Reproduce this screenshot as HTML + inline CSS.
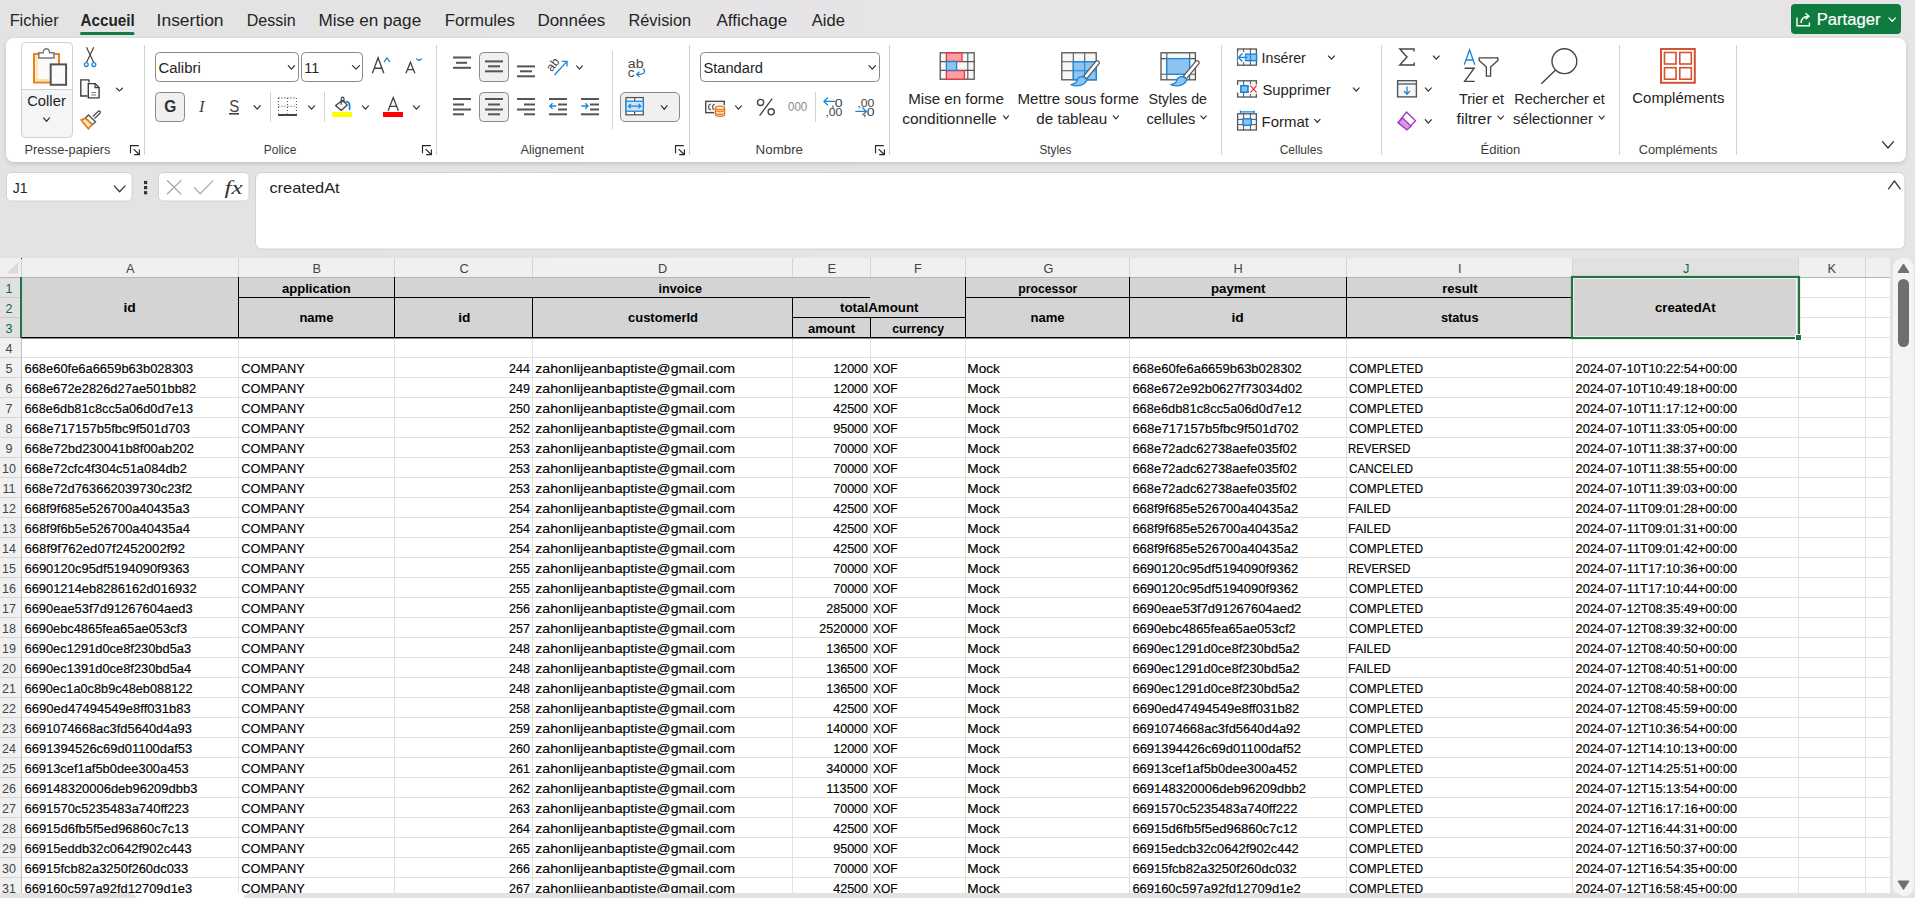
<!DOCTYPE html>
<html><head><meta charset="utf-8"><title>Excel</title>
<style>
html,body{margin:0;padding:0;width:1915px;height:898px;overflow:hidden;background:#e3e3e3;font-family:"Liberation Sans",sans-serif;}
svg.page{position:absolute;left:0;top:0;display:block}
text{white-space:pre}
</style></head><body>
<svg class="page" width="1915" height="898" viewBox="0 0 1915 898">
<defs>
<filter id="sh" x="-2%" y="-20%" width="104%" height="150%"><feDropShadow dx="0" dy="1.5" stdDeviation="2" flood-color="#000" flood-opacity="0.16"/></filter>
</defs>
<defs><linearGradient id="bgg" x1="0" y1="0" x2="1" y2="0"><stop offset="0" stop-color="#e3e3e3"/><stop offset="0.45" stop-color="#e6e4e6"/><stop offset="1" stop-color="#e7e4e7"/></linearGradient></defs>
<rect x="0" y="0" width="1915" height="898" fill="url(#bgg)" />
<text x="9.65" y="26.4" font-family="Liberation Sans" font-size="17.2" fill="#242424" textLength="48.99" lengthAdjust="spacingAndGlyphs">Fichier</text>
<text x="80.50" y="26.4" font-family="Liberation Sans" font-size="17.2" font-weight="bold" fill="#242424" textLength="54.19" lengthAdjust="spacingAndGlyphs">Accueil</text>
<text x="156.58" y="26.4" font-family="Liberation Sans" font-size="17.2" fill="#242424" textLength="66.98" lengthAdjust="spacingAndGlyphs">Insertion</text>
<text x="246.67" y="26.4" font-family="Liberation Sans" font-size="17.2" fill="#242424" textLength="49.06" lengthAdjust="spacingAndGlyphs">Dessin</text>
<text x="318.51" y="26.4" font-family="Liberation Sans" font-size="17.2" fill="#242424" textLength="102.65" lengthAdjust="spacingAndGlyphs">Mise en page</text>
<text x="444.72" y="26.4" font-family="Liberation Sans" font-size="17.2" fill="#242424" textLength="70.16" lengthAdjust="spacingAndGlyphs">Formules</text>
<text x="537.41" y="26.4" font-family="Liberation Sans" font-size="17.2" fill="#242424" textLength="67.87" lengthAdjust="spacingAndGlyphs">Données</text>
<text x="628.55" y="26.4" font-family="Liberation Sans" font-size="17.2" fill="#242424" textLength="62.48" lengthAdjust="spacingAndGlyphs">Révision</text>
<text x="716.50" y="26.4" font-family="Liberation Sans" font-size="17.2" fill="#242424" textLength="70.75" lengthAdjust="spacingAndGlyphs">Affichage</text>
<text x="811.80" y="26.4" font-family="Liberation Sans" font-size="17.2" fill="#242424" textLength="33.14" lengthAdjust="spacingAndGlyphs">Aide</text>
<rect x="80" y="32" width="54.5" height="3" fill="#107c41" rx="1.5" />
<rect x="1791" y="4" width="110" height="30" fill="#0f7b3f" rx="4" />
<text x="1816.73" y="25.1" font-family="Liberation Sans" font-size="17.2" stroke="#ffffff" stroke-width="0.2" fill="#ffffff" textLength="63.80" lengthAdjust="spacingAndGlyphs">Partager</text>
<rect x="6" y="38" width="1900" height="124" rx="8" fill="#ffffff" filter="url(#sh)"/>
<rect x="144" y="45" width="1" height="110" fill="#d2d2d2"/>
<rect x="436" y="45" width="1" height="110" fill="#d2d2d2"/>
<rect x="689" y="45" width="1" height="110" fill="#d2d2d2"/>
<rect x="889" y="45" width="1" height="110" fill="#d2d2d2"/>
<rect x="1221" y="45" width="1" height="110" fill="#d2d2d2"/>
<rect x="1381" y="45" width="1" height="110" fill="#d2d2d2"/>
<rect x="1619" y="45" width="1" height="110" fill="#d2d2d2"/>
<rect x="1736" y="45" width="1" height="110" fill="#d2d2d2"/>
<rect x="155.5" y="52.5" width="143" height="29" fill="#ffffff" rx="4" stroke="#8a8a8a" stroke-width="1" />
<text x="158.50" y="73.2" font-family="Liberation Sans" font-size="15.5" fill="#242424" textLength="42.23" lengthAdjust="spacingAndGlyphs">Calibri</text>
<rect x="301.5" y="52.5" width="61" height="29" fill="#ffffff" rx="4" stroke="#8a8a8a" stroke-width="1" />
<text x="304.37" y="73.2" font-family="Liberation Sans" font-size="15.5" fill="#242424" textLength="14.90" lengthAdjust="spacingAndGlyphs">11</text>
<rect x="700.5" y="52.5" width="179" height="29" fill="#ffffff" rx="4" stroke="#8a8a8a" stroke-width="1" />
<text x="703.40" y="73.0" font-family="Liberation Sans" font-size="15.5" fill="#242424" textLength="59.59" lengthAdjust="spacingAndGlyphs">Standard</text>
<path d="M25.5 42.5 H68.5 Q72.5 42.5 72.5 46.5 V89 H21.5 V46.5 Q21.5 42.5 25.5 42.5 Z" fill="#ffffff" />
<path d="M21.5 89 H72.5 V133.5 Q72.5 137.5 68.5 137.5 H25.5 Q21.5 137.5 21.5 133.5 Z" fill="#f5f5f5" />
<rect x="21.5" y="42.5" width="51" height="95" rx="4" fill="none" stroke="#d0d0d0" stroke-width="1"/>
<rect x="22" y="89" width="50" height="1" fill="#d0d0d0"/>
<rect x="34" y="54" width="25" height="28.5" fill="#fafafa" stroke="#e8821e" stroke-width="2"/>
<rect x="35.5" y="55.5" width="2" height="25.5" fill="#fbe3a0"/>
<rect x="35.5" y="79" width="14" height="2" fill="#fbe3a0"/>
<path d="M38.8 58 V52.8 H43.2 Q43.5 48.8 46.4 48.8 Q49.3 48.8 49.6 52.8 H54 V58 Z" fill="#ffffff" stroke="#7a7a7a" stroke-width="1.5" />
<rect x="50.7" y="64.4" width="15.4" height="20.4" fill="#fafafa" stroke="#555555" stroke-width="2"/>
<path d="M43.54 117.94 L46.55 121.26 L49.56 117.94" fill="none" stroke="#333333" stroke-width="1.2" stroke-linecap="round" stroke-linejoin="round"/>
<path d="M86.5 47.2 L93.7 62.6 M93.7 47.2 L86.5 62.6" fill="none" stroke="#3a3a3a" stroke-width="1.1" />
<circle cx="86.3" cy="64.6" r="1.9" fill="#ffffff" stroke="#1a86d9" stroke-width="1.3"/>
<circle cx="93.9" cy="64.6" r="1.9" fill="#ffffff" stroke="#1a86d9" stroke-width="1.3"/>
<path d="M89 82.5 V80 Q89 79.8 88.8 79.8 H80.8 V96 H87.5" fill="#f9f9f9" stroke="#3a3a3a" stroke-width="1.35" />
<path d="M88.3 83.6 H95.2 L99.1 87.5 V97.8 H88.3 Z" fill="#ffffff" stroke="#3a3a3a" stroke-width="1.35" />
<path d="M95 83.6 V87.7 H99" fill="none" stroke="#3a3a3a" stroke-width="1.2" />
<path d="M91.3 92.6 H96.2 M91.3 95 H96.2" fill="none" stroke="#777777" stroke-width="1" />
<path d="M116.54 88.24 L119.45 90.86 L122.36 88.24" fill="none" stroke="#333333" stroke-width="1.2" stroke-linecap="round" stroke-linejoin="round"/>
<path d="M93 116.5 L98.3 111.3 Q99.5 110.6 100.2 111.6 Q100.6 112.7 99.8 113.6 L94.6 118.6" fill="none" stroke="#555555" stroke-width="1.4" />
<path d="M88.5 115 L95.5 121.8 L92.3 124.8 L85.5 118 Z" fill="#ffffff" stroke="#555555" stroke-width="1.4" />
<path d="M85.3 118.2 Q82.5 119.6 81 119.8 L88.5 129 Q89.8 126.5 92.2 124.6 Z" fill="#fde7b5" stroke="#e07a1a" stroke-width="1.6" stroke-linejoin="round"/>
<path d="M130.5 153.3 V145.6 H138.8" fill="none" stroke="#262626" stroke-width="1.15" />
<path d="M133.6 149.2 L139.2 154.5 M139.4 149.4 V154.6 H134.2" fill="none" stroke="#262626" stroke-width="1.15" />
<path d="M422.5 153.3 V145.6 H430.8" fill="none" stroke="#262626" stroke-width="1.15" />
<path d="M425.6 149.2 L431.2 154.5 M431.4 149.4 V154.6 H426.2" fill="none" stroke="#262626" stroke-width="1.15" />
<path d="M675.5 153.3 V145.6 H683.8" fill="none" stroke="#262626" stroke-width="1.15" />
<path d="M678.6 149.2 L684.2 154.5 M684.4 149.4 V154.6 H679.2" fill="none" stroke="#262626" stroke-width="1.15" />
<path d="M875.5 153.3 V145.6 H883.8" fill="none" stroke="#262626" stroke-width="1.15" />
<path d="M878.6 149.2 L884.2 154.5 M884.4 149.4 V154.6 H879.2" fill="none" stroke="#262626" stroke-width="1.15" />
<path d="M288.34 65.54 L291.45 69.16 L294.56 65.54" fill="none" stroke="#333333" stroke-width="1.2" stroke-linecap="round" stroke-linejoin="round"/>
<path d="M352.54 65.54 L356.00 69.16 L359.46 65.54" fill="none" stroke="#333333" stroke-width="1.2" stroke-linecap="round" stroke-linejoin="round"/>
<path d="M372.4 73.2 L378.1 57.7 L383.8 73.2 M374.3 68.2 H381.9" fill="none" stroke="#444444" stroke-width="1.35" stroke-linejoin="miter"/>
<path d="M384.28 61.59 L386.95 57.81 L389.62 61.59" fill="none" stroke="#1a86d9" stroke-width="1.3" stroke-linecap="round" stroke-linejoin="round"/>
<path d="M405.9 73.2 L410.4 62.3 L414.9 73.2 M407.4 69.6 H413.4" fill="none" stroke="#444444" stroke-width="1.3" stroke-linejoin="miter"/>
<path d="M416.58 58.98 L419.00 60.41 L421.42 58.98" fill="none" stroke="#1a86d9" stroke-width="1.3" stroke-linecap="round" stroke-linejoin="round"/>
<rect x="155.5" y="92.5" width="29" height="29" rx="4" fill="#f0f0f0" stroke="#8a8a8a" stroke-width="1"/>
<text x="164.30" y="112.2" font-family="Liberation Sans" font-size="16.5" font-weight="bold" fill="#303030" textLength="12.09" lengthAdjust="spacingAndGlyphs">G</text>
<text x="198.97" y="112.2" font-family="Liberation Serif" font-size="17" font-style="italic" fill="#444444" textLength="5.52" lengthAdjust="spacingAndGlyphs">I</text>
<text x="229.30" y="112.2" font-family="Liberation Sans" font-size="16" fill="#444444" textLength="10.03" lengthAdjust="spacingAndGlyphs">S</text>
<rect x="229" y="113" width="10" height="1.6" fill="#444444"/>
<path d="M254.14 105.74 L257.15 109.16 L260.16 105.74" fill="none" stroke="#333333" stroke-width="1.2" stroke-linecap="round" stroke-linejoin="round"/>
<rect x="270" y="92" width="1" height="30" fill="#d2d2d2"/>
<path d="M278.4 97.9 H296.4" stroke="#555" stroke-width="1.1" stroke-dasharray="1.1 1.9"/><path d="M278.4 106.3 H296.4" stroke="#555" stroke-width="1.1" stroke-dasharray="1.1 1.9"/><path d="M278.4 97.9 V113.5" stroke="#555" stroke-width="1.1" stroke-dasharray="1.1 1.9"/><path d="M287.4 97.9 V113.5" stroke="#555" stroke-width="1.1" stroke-dasharray="1.1 1.9"/><path d="M296.4 97.9 V113.5" stroke="#555" stroke-width="1.1" stroke-dasharray="1.1 1.9"/>
<rect x="278" y="114" width="19" height="2" fill="#444444"/>
<path d="M308.54 105.84 L311.55 109.06 L314.56 105.84" fill="none" stroke="#333333" stroke-width="1.2" stroke-linecap="round" stroke-linejoin="round"/>
<rect x="324" y="92" width="1" height="30" fill="#d2d2d2"/>
<path d="M335.6 105.4 L342.6 100.2 L347.2 104.9 L341.2 110.4 Z" fill="#f7f7f7" stroke="#444444" stroke-width="1.3" stroke-linejoin="round"/>
<path d="M341.2 104.8 V98.6 Q341.4 97.2 342.6 97.2 Q343.9 97.3 344 98.6 V102.5" fill="none" stroke="#444444" stroke-width="1.2" />
<path d="M346.2 101.6 Q349.6 101.9 349.6 105.5 V109.2" fill="none" stroke="#1a86d9" stroke-width="1.8" stroke-linecap="round"/>
<rect x="332" y="112" width="20" height="5" fill="#ffff00" />
<path d="M362.44 105.84 L365.45 109.06 L368.46 105.84" fill="none" stroke="#333333" stroke-width="1.2" stroke-linecap="round" stroke-linejoin="round"/>
<path d="M388.1 110.8 L393.25 97.6 L398.4 110.8 M389.9 106.3 H396.6" fill="none" stroke="#444444" stroke-width="1.35" stroke-linejoin="miter"/>
<rect x="383" y="112" width="20" height="5" fill="#ff0000" />
<path d="M413.44 105.84 L416.45 109.06 L419.46 105.84" fill="none" stroke="#333333" stroke-width="1.2" stroke-linecap="round" stroke-linejoin="round"/>
<rect x="453" y="56.5" width="18" height="2" fill="#555555"/>
<rect x="456" y="61.8" width="11" height="2" fill="#555555"/>
<rect x="453" y="66.8" width="18" height="2" fill="#555555"/>
<rect x="479.5" y="52.5" width="29" height="29" rx="4" fill="#f0f0f0" stroke="#8a8a8a" stroke-width="1"/>
<rect x="485" y="60.4" width="18" height="2" fill="#555555"/>
<rect x="488" y="65.3" width="12" height="2" fill="#555555"/>
<rect x="485" y="70.3" width="18" height="2" fill="#555555"/>
<rect x="517" y="65.4" width="18" height="2" fill="#555555"/>
<rect x="520" y="70.3" width="12" height="2" fill="#555555"/>
<rect x="517" y="75.3" width="18" height="2" fill="#555555"/>
<text x="0" y="0" font-family="Liberation Sans" font-size="12" fill="#444" transform="translate(551.8 72.2) rotate(-52)">ab</text>
<path d="M554.5 75 L566.8 61.6 M561.8 61.3 H567 V66.5" fill="none" stroke="#1a86d9" stroke-width="1.3" />
<path d="M576.64 65.94 L579.50 69.16 L582.36 65.94" fill="none" stroke="#333333" stroke-width="1.2" stroke-linecap="round" stroke-linejoin="round"/>
<rect x="612" y="51" width="1" height="78" fill="#d2d2d2"/>
<text x="627.80" y="67.6" font-family="Liberation Sans" font-size="12.5" fill="#444444" textLength="15.75" lengthAdjust="spacingAndGlyphs">ab</text>
<text x="627.80" y="76.6" font-family="Liberation Sans" font-size="12.5" fill="#444444" textLength="6.67" lengthAdjust="spacingAndGlyphs">c</text>
<path d="M643.2 68.5 Q645.3 70.2 644 72.8 Q642.6 74.5 637 74.3 M639.3 71.7 L636.7 74.3 L639.3 76.7" fill="none" stroke="#1a86d9" stroke-width="1.3" />
<rect x="453" y="98" width="18" height="2" fill="#555555"/>
<rect x="453" y="103.5" width="11" height="2" fill="#555555"/>
<rect x="453" y="108.5" width="18" height="2" fill="#555555"/>
<rect x="453" y="113.3" width="11" height="2" fill="#555555"/>
<rect x="479.5" y="92.5" width="29" height="29" rx="4" fill="#f0f0f0" stroke="#8a8a8a" stroke-width="1"/>
<rect x="485" y="98" width="18" height="2" fill="#555555"/>
<rect x="488" y="103.5" width="12" height="2" fill="#555555"/>
<rect x="485" y="108.5" width="18" height="2" fill="#555555"/>
<rect x="488" y="113.3" width="12" height="2" fill="#555555"/>
<rect x="517" y="98" width="18" height="2" fill="#555555"/>
<rect x="524" y="103.5" width="11" height="2" fill="#555555"/>
<rect x="517" y="108.5" width="18" height="2" fill="#555555"/>
<rect x="524" y="113.3" width="11" height="2" fill="#555555"/>
<rect x="549" y="98" width="18" height="2" fill="#555555"/>
<rect x="558" y="103.5" width="9" height="2" fill="#555555"/>
<rect x="558" y="108.5" width="9" height="2" fill="#555555"/>
<rect x="549" y="113.3" width="18" height="2" fill="#555555"/>
<path d="M549.8 106 H556.3 M552.6 103.3 L549.8 106 L552.6 108.7" fill="none" stroke="#1a86d9" stroke-width="1.3" />
<rect x="581" y="98" width="18" height="2" fill="#555555"/>
<rect x="590" y="103.5" width="9" height="2" fill="#555555"/>
<rect x="590" y="108.5" width="9" height="2" fill="#555555"/>
<rect x="581" y="113.3" width="18" height="2" fill="#555555"/>
<path d="M581.5 106 H588 M585.3 103.3 L588 106 L585.3 108.7" fill="none" stroke="#1a86d9" stroke-width="1.3" />
<rect x="620.5" y="92.5" width="59" height="29" rx="4.5" fill="#f0f0f0" stroke="#8a8a8a" stroke-width="1"/>
<rect x="626" y="97.6" width="17.3" height="17.2" fill="#ffffff" stroke="#555" stroke-width="1.3"/>
<rect x="634" y="97" width="1.3" height="4" fill="#555"/>
<rect x="634" y="112" width="1.3" height="3" fill="#555"/>
<rect x="626" y="101.2" width="17.3" height="10" fill="#cfe4f7" stroke="#1a86d9" stroke-width="1.3"/>
<path d="M628.5 106.2 H640.8 M630.8 104 L628.5 106.2 L630.8 108.4 M638.5 104 L640.8 106.2 L638.5 108.4" fill="none" stroke="#1a86d9" stroke-width="1.2" />
<path d="M661.34 105.74 L664.25 109.26 L667.16 105.74" fill="none" stroke="#333333" stroke-width="1.2" stroke-linecap="round" stroke-linejoin="round"/>
<path d="M869.04 65.54 L872.25 69.16 L875.46 65.54" fill="none" stroke="#333333" stroke-width="1.2" stroke-linecap="round" stroke-linejoin="round"/>
<rect x="705.7" y="101.3" width="18.6" height="11.4" fill="#f4f4f4" stroke="#444" stroke-width="1.3"/>
<path d="M710.8 104.2 Q708.6 104.4 708.6 107 Q708.6 109.6 710.8 109.8 M714.8 104.2 Q712.6 104.4 712.6 107 Q712.6 109.6 714.8 109.8" fill="none" stroke="#555" stroke-width="1.1" />
<rect x="714.2" y="105.2" width="11.5" height="12" fill="#ffffff"/>
<path d="M715.4 108 V114.6 Q715.4 116.4 720 116.4 Q724.6 116.4 724.6 114.6 V108" fill="#fde9c9" stroke="#e0782a" stroke-width="1.3"/>
<ellipse cx="720" cy="107.9" rx="4.6" ry="1.7" fill="#fde9c9" stroke="#e0782a" stroke-width="1.3"/>
<path d="M715.4 110.8 Q720 112.8 724.6 110.8 M715.4 113.4 Q720 115.4 724.6 113.4" fill="none" stroke="#e0782a" stroke-width="1.1" />
<path d="M735.54 105.84 L738.50 109.06 L741.46 105.84" fill="none" stroke="#333333" stroke-width="1.2" stroke-linecap="round" stroke-linejoin="round"/>
<circle cx="760.6" cy="102.4" r="3.1" fill="none" stroke="#444" stroke-width="1.35"/>
<circle cx="771.2" cy="111.8" r="3.1" fill="none" stroke="#444" stroke-width="1.35"/>
<path d="M772.2 98.6 L759.6 115.6" fill="none" stroke="#444" stroke-width="1.35" />
<text x="788.00" y="111.2" font-family="Liberation Sans" font-size="12.5" fill="#8a8a8a" textLength="19.26" lengthAdjust="spacingAndGlyphs">000</text>
<rect x="815" y="92" width="1" height="30" fill="#d2d2d2"/>
<text x="830.78" y="106.5" font-family="Liberation Sans" font-size="11.5" fill="#444444" textLength="11.70" lengthAdjust="spacingAndGlyphs">,0</text>
<text x="825.44" y="116.2" font-family="Liberation Sans" font-size="11.5" fill="#444444" textLength="16.98" lengthAdjust="spacingAndGlyphs">,00</text>
<path d="M824 101.4 H835.2 M827.9 97.5 L824 101.4 L827.9 105.3" fill="none" stroke="#1a86d9" stroke-width="1.35" />
<text x="857.44" y="106.5" font-family="Liberation Sans" font-size="11.5" fill="#444444" textLength="16.98" lengthAdjust="spacingAndGlyphs">,00</text>
<text x="862.78" y="116.2" font-family="Liberation Sans" font-size="11.5" fill="#444444" textLength="11.70" lengthAdjust="spacingAndGlyphs">,0</text>
<path d="M855.4 111.4 H866.4 M862.5 107.5 L866.4 111.4 L862.5 115.3" fill="none" stroke="#1a86d9" stroke-width="1.35" />
<rect x="940.2" y="52.8" width="34" height="26.4" fill="#f7f7f7" stroke="#555" stroke-width="1.3"/>
<path d="M940 61.6 H974.4 M940 70.4 H974.4 M967.8 52.8 V79.2" fill="none" stroke="#555" stroke-width="1.1" />
<rect x="946.4" y="53" width="15.6" height="8.4" fill="#ff9ca4" stroke="#e0383f" stroke-width="1.3"/>
<rect x="946.4" y="70.6" width="18" height="8.6" fill="#ff9ca4" stroke="#e0383f" stroke-width="1.3"/>
<rect x="946.4" y="61.6" width="10.2" height="8.8" fill="#8fc3ef" stroke="#1a86d9" stroke-width="1.3"/>
<rect x="1061.8" y="52.8" width="34.4" height="27" fill="#f7f7f7" stroke="#555" stroke-width="1.3"/>
<path d="M1073.3 52.8 V79.8 M1084.7 52.8 V79.8 M1061.8 61.8 H1096.2 M1061.8 70.8 H1096.2" fill="none" stroke="#555" stroke-width="1.1" />
<rect x="1073.3" y="61.8" width="22.9" height="18" fill="#8fc3ef" stroke="#1a86d9" stroke-width="1.3"/>
<path d="M1084.7 61.8 V79.8 M1073.3 70.8 H1096.2" fill="none" stroke="#1a86d9" stroke-width="1.1" />
<path d="M1083.66 76.12 L1096.26 60.92 Q1099.46 60.20 1099.34 63.48 L1086.74 78.68 Z" fill="#ffffff" stroke="#505050" stroke-width="1.15" stroke-linejoin="round"/><path d="M1082.40 76.40 Q1077.60 77.00 1077.00 80.40 Q1076.40 83.60 1071.00 84.60 Q1078.40 87.40 1083.60 84.00 Q1086.90 81.80 1086.80 79.00 Z" fill="#8fc3ef" stroke="#1a86d9" stroke-width="1.3" stroke-linejoin="round"/>
<rect x="1161" y="52.8" width="34.4" height="27" fill="#f7f7f7" stroke="#555" stroke-width="1.3"/>
<path d="M1161 58.6 H1195.4 M1161 74.2 H1195.4 M1166.8 52.8 V79.8 M1189.6 52.8 V79.8" fill="none" stroke="#555" stroke-width="1.1" />
<rect x="1166.8" y="58.6" width="22.8" height="15.6" fill="#8fc3ef" stroke="#1a86d9" stroke-width="1.3"/>
<path d="M1183.46 76.12 L1196.06 60.92 Q1199.26 60.20 1199.14 63.48 L1186.54 78.68 Z" fill="#ffffff" stroke="#505050" stroke-width="1.15" stroke-linejoin="round"/><path d="M1182.20 76.40 Q1177.40 77.00 1176.80 80.40 Q1176.20 83.60 1170.80 84.60 Q1178.20 87.40 1183.40 84.00 Q1186.70 81.80 1186.60 79.00 Z" fill="#8fc3ef" stroke="#1a86d9" stroke-width="1.3" stroke-linejoin="round"/>
<path d="M1003.54 115.94 L1006.00 118.96 L1008.46 115.94" fill="none" stroke="#333333" stroke-width="1.2" stroke-linecap="round" stroke-linejoin="round"/>
<path d="M1113.24 115.94 L1115.85 118.96 L1118.46 115.94" fill="none" stroke="#333333" stroke-width="1.2" stroke-linecap="round" stroke-linejoin="round"/>
<path d="M1200.84 115.94 L1203.55 118.96 L1206.26 115.94" fill="none" stroke="#333333" stroke-width="1.2" stroke-linecap="round" stroke-linejoin="round"/>
<rect x="1237.6" y="49.0" width="18.8" height="16.2" fill="#f7f7f7" stroke="#555" stroke-width="1.3"/><path d="M1243.6 48.4 V65.8" stroke="#555" stroke-width="1"/><path d="M1250.4 48.4 V65.8" stroke="#555" stroke-width="1"/><path d="M1237 54.6 H1257" stroke="#555" stroke-width="1"/><path d="M1237 59.8 H1257" stroke="#555" stroke-width="1"/>
<rect x="1245" y="54.2" width="11.6" height="6.4" fill="#8fc3ef" stroke="#1a86d9" stroke-width="1.4"/>
<path d="M1250.5 54.2 V60.6" fill="none" stroke="#1a86d9" stroke-width="1.1" />
<rect x="1237.8" y="52.2" width="7" height="10" fill="#ffffff"/>
<path d="M1238.4 57.4 H1247.6 M1242.4 53.4 L1238.4 57.4 L1242.4 61.4" fill="none" stroke="#1a86d9" stroke-width="1.4" />
<path d="M1328.54 56.04 L1331.50 59.06 L1334.46 56.04" fill="none" stroke="#333333" stroke-width="1.2" stroke-linecap="round" stroke-linejoin="round"/>
<rect x="1237.6" y="80.8" width="18.8" height="16.2" fill="#f7f7f7" stroke="#555" stroke-width="1.3"/><path d="M1243.6 80.2 V97.6" stroke="#555" stroke-width="1"/><path d="M1250.4 80.2 V97.6" stroke="#555" stroke-width="1"/><path d="M1237 86.4 H1257" stroke="#555" stroke-width="1"/><path d="M1237 91.60000000000001 H1257" stroke="#555" stroke-width="1"/>
<rect x="1249" y="84.5" width="8.5" height="9.5" fill="#ffffff"/>
<rect x="1236.5" y="85" width="3.6" height="7.6" fill="#ffffff"/>
<rect x="1240.9" y="85.8" width="7" height="6.4" fill="#8fc3ef" stroke="#1a86d9" stroke-width="1.6"/>
<path d="M1250.4 85.6 L1256.6 92.6 M1256.6 85.6 L1250.4 92.6" fill="none" stroke="#e8333a" stroke-width="1.3" />
<path d="M1353.34 87.94 L1356.25 91.16 L1359.16 87.94" fill="none" stroke="#333333" stroke-width="1.2" stroke-linecap="round" stroke-linejoin="round"/>
<rect x="1237.6" y="113.8" width="18.8" height="16.2" fill="#f7f7f7" stroke="#555" stroke-width="1.3"/><path d="M1243.6 113.2 V130.6" stroke="#555" stroke-width="1"/><path d="M1250.4 113.2 V130.6" stroke="#555" stroke-width="1"/><path d="M1237 119.4 H1257" stroke="#555" stroke-width="1"/><path d="M1237 124.60000000000001 H1257" stroke="#555" stroke-width="1"/>
<rect x="1243" y="118.8" width="8.2" height="6.4" fill="#8fc3ef" stroke="#1a86d9" stroke-width="1.5"/>
<path d="M1240.4 111.9 H1254.2 M1240.4 110.4 V113.6 M1254.2 110.4 V113.6" fill="none" stroke="#1a86d9" stroke-width="1.2" />
<path d="M1314.64 119.34 L1317.35 122.26 L1320.06 119.34" fill="none" stroke="#333333" stroke-width="1.2" stroke-linecap="round" stroke-linejoin="round"/>
<path d="M1414 51.5 V49 H1399.8 L1407 57 L1399.8 65 H1414.2 V62.5" fill="none" stroke="#444" stroke-width="1.4" stroke-linejoin="miter"/>
<path d="M1433.34 56.04 L1436.25 59.06 L1439.16 56.04" fill="none" stroke="#333333" stroke-width="1.2" stroke-linecap="round" stroke-linejoin="round"/>
<rect x="1397.6" y="80.7" width="18.8" height="16.2" fill="#f7f7f7" stroke="#555" stroke-width="1.4"/>
<rect x="1398" y="83.3" width="18" height="1.3" fill="#555"/>
<path d="M1407 86.4 V94 M1403.8 90.9 L1407 94.2 L1410.2 90.9" fill="none" stroke="#1a86d9" stroke-width="1.3" />
<path d="M1425.34 87.94 L1428.30 91.16 L1431.26 87.94" fill="none" stroke="#333333" stroke-width="1.2" stroke-linecap="round" stroke-linejoin="round"/>
<path d="M1398 122.6 L1406.5 112 L1415.5 120.8 L1406.9 129.8 Z" fill="#ffffff" stroke="#a23fb8" stroke-width="1.4" stroke-linejoin="round"/>
<path d="M1398.2 122.6 L1402.7 118 L1411.2 126.2 L1406.9 129.8 Z" fill="#d49be0" stroke="#a23fb8" stroke-width="1.2" stroke-linejoin="round"/>
<path d="M1425.34 119.74 L1428.30 123.06 L1431.26 119.74" fill="none" stroke="#333333" stroke-width="1.2" stroke-linecap="round" stroke-linejoin="round"/>
<path d="M1464.3 64.8 L1469.55 49.9 L1474.8 64.8 M1466 60 H1473.1" fill="none" stroke="#1a86d9" stroke-width="1.35" stroke-linejoin="miter"/>
<path d="M1464.6 68.2 H1474.2 L1464.6 81.4 H1474.8" fill="none" stroke="#444444" stroke-width="1.35" stroke-linejoin="miter"/>
<path d="M1479.2 57.8 H1497.9 V60.4 L1490.6 67 V76.2 H1486.4 V67 L1479.2 60.4 Z" fill="#ffffff" stroke="#444" stroke-width="1.3" stroke-linejoin="round"/>
<circle cx="1564.4" cy="61.2" r="12.4" fill="#ffffff" stroke="#444" stroke-width="1.4"/>
<path d="M1555.6 70 L1541.3 83.8" fill="none" stroke="#444" stroke-width="1.4" />
<path d="M1497.94 116.14 L1500.70 119.06 L1503.46 116.14" fill="none" stroke="#333333" stroke-width="1.2" stroke-linecap="round" stroke-linejoin="round"/>
<path d="M1599.14 116.14 L1601.65 119.06 L1604.16 116.14" fill="none" stroke="#333333" stroke-width="1.2" stroke-linecap="round" stroke-linejoin="round"/>
<rect x="1661" y="49" width="33.8" height="33.8" fill="#ffffff" stroke="#d35230" stroke-width="2"/>
<rect x="1664.5" y="52.5" width="11.5" height="11.5" fill="#ffffff" stroke="#d35230" stroke-width="1.6"/>
<rect x="1679.8" y="52.5" width="11.5" height="11.5" fill="#ffffff" stroke="#d35230" stroke-width="1.6"/>
<rect x="1664.5" y="67.7" width="11.5" height="11.5" fill="#ffffff" stroke="#d35230" stroke-width="1.6"/>
<rect x="1679.8" y="67.7" width="11.5" height="11.5" fill="#ffffff" stroke="#d35230" stroke-width="1.6"/>
<path d="M1882.59 141.59 L1888.00 148.01 L1893.41 141.59" fill="none" stroke="#333" stroke-width="1.3" stroke-linecap="round" stroke-linejoin="round"/>
<path d="M1797 17.5 V25.8 H1809.4 V22.5" fill="none" stroke="#ffffff" stroke-width="1.4" />
<path d="M1801 23 Q1801.5 16.5 1808.5 16.3 M1805.5 13.3 L1809 16.3 L1805.5 19.3" fill="none" stroke="#ffffff" stroke-width="1.4" />
<path d="M1888.99 17.89 L1892.20 21.21 L1895.41 17.89" fill="none" stroke="#ffffff" stroke-width="1.3" stroke-linecap="round" stroke-linejoin="round"/>
<text x="24.60" y="154" font-family="Liberation Sans" font-size="12" fill="#3b3b3b" textLength="85.80" lengthAdjust="spacingAndGlyphs">Presse-papiers</text>
<text x="263.80" y="154" font-family="Liberation Sans" font-size="12" fill="#3b3b3b" textLength="32.57" lengthAdjust="spacingAndGlyphs">Police</text>
<text x="520.40" y="154" font-family="Liberation Sans" font-size="12" fill="#3b3b3b" textLength="63.69" lengthAdjust="spacingAndGlyphs">Alignement</text>
<text x="755.60" y="154" font-family="Liberation Sans" font-size="12" fill="#3b3b3b" textLength="47.44" lengthAdjust="spacingAndGlyphs">Nombre</text>
<text x="1039.50" y="154" font-family="Liberation Sans" font-size="12" fill="#3b3b3b" textLength="32.00" lengthAdjust="spacingAndGlyphs">Styles</text>
<text x="1279.70" y="154" font-family="Liberation Sans" font-size="12" fill="#3b3b3b" textLength="42.70" lengthAdjust="spacingAndGlyphs">Cellules</text>
<text x="1480.50" y="154" font-family="Liberation Sans" font-size="12" fill="#3b3b3b" textLength="39.83" lengthAdjust="spacingAndGlyphs">Édition</text>
<text x="1638.70" y="154" font-family="Liberation Sans" font-size="12" fill="#3b3b3b" textLength="78.80" lengthAdjust="spacingAndGlyphs">Compléments</text>
<text x="27.20" y="106.2" font-family="Liberation Sans" font-size="14.8" fill="#242424" textLength="38.63" lengthAdjust="spacingAndGlyphs">Coller</text>
<text x="908.28" y="104.2" font-family="Liberation Sans" font-size="14.8" fill="#242424" textLength="95.55" lengthAdjust="spacingAndGlyphs">Mise en forme</text>
<text x="902.20" y="124.1" font-family="Liberation Sans" font-size="14.8" fill="#242424" textLength="94.54" lengthAdjust="spacingAndGlyphs">conditionnelle</text>
<text x="1017.58" y="104.2" font-family="Liberation Sans" font-size="14.8" fill="#242424" textLength="121.25" lengthAdjust="spacingAndGlyphs">Mettre sous forme</text>
<text x="1036.30" y="124.1" font-family="Liberation Sans" font-size="14.8" fill="#242424" textLength="70.94" lengthAdjust="spacingAndGlyphs">de tableau</text>
<text x="1148.40" y="104.2" font-family="Liberation Sans" font-size="14.8" fill="#242424" textLength="58.62" lengthAdjust="spacingAndGlyphs">Styles de</text>
<text x="1146.50" y="124.1" font-family="Liberation Sans" font-size="14.8" fill="#242424" textLength="48.89" lengthAdjust="spacingAndGlyphs">cellules</text>
<text x="1261.54" y="63" font-family="Liberation Sans" font-size="14.8" fill="#242424" textLength="44.29" lengthAdjust="spacingAndGlyphs">Insérer</text>
<text x="1262.50" y="94.8" font-family="Liberation Sans" font-size="14.8" fill="#242424" textLength="68.23" lengthAdjust="spacingAndGlyphs">Supprimer</text>
<text x="1261.49" y="127" font-family="Liberation Sans" font-size="14.8" fill="#242424" textLength="47.42" lengthAdjust="spacingAndGlyphs">Format</text>
<text x="1459.00" y="103.8" font-family="Liberation Sans" font-size="14.8" fill="#242424" textLength="45.11" lengthAdjust="spacingAndGlyphs">Trier et</text>
<text x="1456.50" y="123.6" font-family="Liberation Sans" font-size="14.8" fill="#242424" textLength="35.22" lengthAdjust="spacingAndGlyphs">filtrer</text>
<text x="1514.23" y="103.8" font-family="Liberation Sans" font-size="14.8" fill="#242424" textLength="90.58" lengthAdjust="spacingAndGlyphs">Rechercher et</text>
<text x="1513.10" y="123.6" font-family="Liberation Sans" font-size="14.8" fill="#242424" textLength="79.83" lengthAdjust="spacingAndGlyphs">sélectionner</text>
<text x="1632.30" y="103.4" font-family="Liberation Sans" font-size="14.8" fill="#242424" textLength="92.10" lengthAdjust="spacingAndGlyphs">Compléments</text>
<rect x="6.5" y="172.5" width="125.5" height="28.5" fill="#ffffff" rx="4.5" stroke="#d2d2d2" stroke-width="1" />
<text x="12.80" y="193.4" font-family="Liberation Sans" font-size="15" fill="#242424" textLength="14.82" lengthAdjust="spacingAndGlyphs">J1</text>
<rect x="158.5" y="172.5" width="90.5" height="28.5" fill="#ffffff" rx="4.5" stroke="#d2d2d2" stroke-width="1" />
<rect x="255.5" y="172.5" width="1649.5" height="76.5" fill="#ffffff" rx="6.5" stroke="#d2d2d2" stroke-width="1" />
<text x="269.40" y="193.4" font-family="Liberation Sans" font-size="15" fill="#242424" textLength="70.29" lengthAdjust="spacingAndGlyphs">createdAt</text>
<path d="M114.24 185.94 L119.65 191.76 L125.06 185.94" fill="none" stroke="#333" stroke-width="1.2" stroke-linecap="round" stroke-linejoin="round"/>
<rect x="144" y="180.9" width="3.2" height="3.2" fill="#333"/>
<rect x="144" y="186.0" width="3.2" height="3.2" fill="#333"/>
<rect x="144" y="191.1" width="3.2" height="3.2" fill="#333"/>
<path d="M167 180.3 L181.2 194.3 M181.2 180.3 L167 194.3" fill="none" stroke="#a8a8a8" stroke-width="1.2" />
<path d="M194.2 187.5 L200.2 193.6 L213.3 180.3" fill="none" stroke="#a8a8a8" stroke-width="1.2" />
<text x="224.60" y="193.5" font-family="Liberation Serif" font-size="19" font-style="italic" fill="#333333" textLength="18.05" lengthAdjust="spacingAndGlyphs">fx</text>
<path d="M1888.59 188.78 L1894.40 180.91 L1900.21 188.78" fill="none" stroke="#333" stroke-width="1.3" stroke-linecap="round" stroke-linejoin="round"/>
<rect x="0" y="258" width="1890" height="20" fill="#f0f0f0" />
<rect x="1572" y="258" width="226" height="19" fill="#e1e1e1" />
<rect x="21" y="258" width="1" height="19" fill="#d5d5d5"/>
<rect x="238" y="258" width="1" height="19" fill="#d5d5d5"/>
<rect x="394" y="258" width="1" height="19" fill="#d5d5d5"/>
<rect x="532" y="258" width="1" height="19" fill="#d5d5d5"/>
<rect x="792" y="258" width="1" height="19" fill="#d5d5d5"/>
<rect x="870" y="258" width="1" height="19" fill="#d5d5d5"/>
<rect x="965" y="258" width="1" height="19" fill="#d5d5d5"/>
<rect x="1129" y="258" width="1" height="19" fill="#d5d5d5"/>
<rect x="1346" y="258" width="1" height="19" fill="#d5d5d5"/>
<rect x="1572" y="258" width="1" height="19" fill="#d5d5d5"/>
<rect x="1798" y="258" width="1" height="19" fill="#d5d5d5"/>
<rect x="1865" y="258" width="1" height="19" fill="#d5d5d5"/>
<rect x="0" y="277" width="1890" height="1" fill="#b4b4b4"/>
<text x="126.00" y="272.6" font-family="Liberation Sans" font-size="12.8" fill="#444444" textLength="8.54" lengthAdjust="spacingAndGlyphs">A</text>
<text x="312.50" y="272.6" font-family="Liberation Sans" font-size="12.8" fill="#444444" textLength="8.54" lengthAdjust="spacingAndGlyphs">B</text>
<text x="459.50" y="272.6" font-family="Liberation Sans" font-size="12.8" fill="#444444" textLength="9.24" lengthAdjust="spacingAndGlyphs">C</text>
<text x="658.00" y="272.6" font-family="Liberation Sans" font-size="12.8" fill="#444444" textLength="9.24" lengthAdjust="spacingAndGlyphs">D</text>
<text x="827.50" y="272.6" font-family="Liberation Sans" font-size="12.8" fill="#444444" textLength="8.54" lengthAdjust="spacingAndGlyphs">E</text>
<text x="914.00" y="272.6" font-family="Liberation Sans" font-size="12.8" fill="#444444" textLength="7.82" lengthAdjust="spacingAndGlyphs">F</text>
<text x="1043.50" y="272.6" font-family="Liberation Sans" font-size="12.8" fill="#444444" textLength="9.95" lengthAdjust="spacingAndGlyphs">G</text>
<text x="1233.50" y="272.6" font-family="Liberation Sans" font-size="12.8" fill="#444444" textLength="9.24" lengthAdjust="spacingAndGlyphs">H</text>
<text x="1458.00" y="272.6" font-family="Liberation Sans" font-size="12.8" fill="#444444" textLength="3.56" lengthAdjust="spacingAndGlyphs">I</text>
<text x="1683.00" y="272.6" font-family="Liberation Sans" font-size="12.8" fill="#0e6b38" textLength="6.40" lengthAdjust="spacingAndGlyphs">J</text>
<text x="1827.50" y="272.6" font-family="Liberation Sans" font-size="12.8" fill="#444444" textLength="8.54" lengthAdjust="spacingAndGlyphs">K</text>
<rect x="0" y="278" width="21" height="615" fill="#f0f0f0" />
<rect x="0" y="278" width="20" height="60" fill="#e1e1e1" />
<rect x="21" y="278" width="1" height="615" fill="#c2c2c2"/>
<path d="M6.5 273.5 L18 262.5 L18 273.5 Z" fill="#dadada"/>
<rect x="21" y="258" width="1" height="19" fill="#d0d0d0"/>
<rect x="21" y="258" width="1" height="1" fill="#202020" />
<rect x="22" y="278" width="1868" height="615" fill="#ffffff" />
<rect x="0" y="297" width="21" height="1" fill="#c8c8c8"/>
<rect x="22" y="297" width="1868" height="1" fill="#e1e1e1"/>
<rect x="0" y="317" width="21" height="1" fill="#c8c8c8"/>
<rect x="22" y="317" width="1868" height="1" fill="#e1e1e1"/>
<rect x="0" y="337" width="21" height="1" fill="#c8c8c8"/>
<rect x="22" y="337" width="1868" height="1" fill="#e1e1e1"/>
<rect x="0" y="357" width="21" height="1" fill="#d6d6d6"/>
<rect x="22" y="357" width="1868" height="1" fill="#e1e1e1"/>
<rect x="0" y="377" width="21" height="1" fill="#d6d6d6"/>
<rect x="22" y="377" width="1868" height="1" fill="#e1e1e1"/>
<rect x="0" y="397" width="21" height="1" fill="#d6d6d6"/>
<rect x="22" y="397" width="1868" height="1" fill="#e1e1e1"/>
<rect x="0" y="417" width="21" height="1" fill="#d6d6d6"/>
<rect x="22" y="417" width="1868" height="1" fill="#e1e1e1"/>
<rect x="0" y="437" width="21" height="1" fill="#d6d6d6"/>
<rect x="22" y="437" width="1868" height="1" fill="#e1e1e1"/>
<rect x="0" y="457" width="21" height="1" fill="#d6d6d6"/>
<rect x="22" y="457" width="1868" height="1" fill="#e1e1e1"/>
<rect x="0" y="477" width="21" height="1" fill="#d6d6d6"/>
<rect x="22" y="477" width="1868" height="1" fill="#e1e1e1"/>
<rect x="0" y="497" width="21" height="1" fill="#d6d6d6"/>
<rect x="22" y="497" width="1868" height="1" fill="#e1e1e1"/>
<rect x="0" y="517" width="21" height="1" fill="#d6d6d6"/>
<rect x="22" y="517" width="1868" height="1" fill="#e1e1e1"/>
<rect x="0" y="537" width="21" height="1" fill="#d6d6d6"/>
<rect x="22" y="537" width="1868" height="1" fill="#e1e1e1"/>
<rect x="0" y="557" width="21" height="1" fill="#d6d6d6"/>
<rect x="22" y="557" width="1868" height="1" fill="#e1e1e1"/>
<rect x="0" y="577" width="21" height="1" fill="#d6d6d6"/>
<rect x="22" y="577" width="1868" height="1" fill="#e1e1e1"/>
<rect x="0" y="597" width="21" height="1" fill="#d6d6d6"/>
<rect x="22" y="597" width="1868" height="1" fill="#e1e1e1"/>
<rect x="0" y="617" width="21" height="1" fill="#d6d6d6"/>
<rect x="22" y="617" width="1868" height="1" fill="#e1e1e1"/>
<rect x="0" y="637" width="21" height="1" fill="#d6d6d6"/>
<rect x="22" y="637" width="1868" height="1" fill="#e1e1e1"/>
<rect x="0" y="657" width="21" height="1" fill="#d6d6d6"/>
<rect x="22" y="657" width="1868" height="1" fill="#e1e1e1"/>
<rect x="0" y="677" width="21" height="1" fill="#d6d6d6"/>
<rect x="22" y="677" width="1868" height="1" fill="#e1e1e1"/>
<rect x="0" y="697" width="21" height="1" fill="#d6d6d6"/>
<rect x="22" y="697" width="1868" height="1" fill="#e1e1e1"/>
<rect x="0" y="717" width="21" height="1" fill="#d6d6d6"/>
<rect x="22" y="717" width="1868" height="1" fill="#e1e1e1"/>
<rect x="0" y="737" width="21" height="1" fill="#d6d6d6"/>
<rect x="22" y="737" width="1868" height="1" fill="#e1e1e1"/>
<rect x="0" y="757" width="21" height="1" fill="#d6d6d6"/>
<rect x="22" y="757" width="1868" height="1" fill="#e1e1e1"/>
<rect x="0" y="777" width="21" height="1" fill="#d6d6d6"/>
<rect x="22" y="777" width="1868" height="1" fill="#e1e1e1"/>
<rect x="0" y="797" width="21" height="1" fill="#d6d6d6"/>
<rect x="22" y="797" width="1868" height="1" fill="#e1e1e1"/>
<rect x="0" y="817" width="21" height="1" fill="#d6d6d6"/>
<rect x="22" y="817" width="1868" height="1" fill="#e1e1e1"/>
<rect x="0" y="837" width="21" height="1" fill="#d6d6d6"/>
<rect x="22" y="837" width="1868" height="1" fill="#e1e1e1"/>
<rect x="0" y="857" width="21" height="1" fill="#d6d6d6"/>
<rect x="22" y="857" width="1868" height="1" fill="#e1e1e1"/>
<rect x="0" y="877" width="21" height="1" fill="#d6d6d6"/>
<rect x="22" y="877" width="1868" height="1" fill="#e1e1e1"/>
<rect x="0" y="897" width="21" height="1" fill="#d6d6d6"/>
<rect x="22" y="897" width="1868" height="1" fill="#e1e1e1"/>
<rect x="238" y="278" width="1" height="615" fill="#e1e1e1"/>
<rect x="394" y="278" width="1" height="615" fill="#e1e1e1"/>
<rect x="532" y="278" width="1" height="615" fill="#e1e1e1"/>
<rect x="792" y="278" width="1" height="615" fill="#e1e1e1"/>
<rect x="870" y="278" width="1" height="615" fill="#e1e1e1"/>
<rect x="965" y="278" width="1" height="615" fill="#e1e1e1"/>
<rect x="1129" y="278" width="1" height="615" fill="#e1e1e1"/>
<rect x="1346" y="278" width="1" height="615" fill="#e1e1e1"/>
<rect x="1572" y="278" width="1" height="615" fill="#e1e1e1"/>
<rect x="1798" y="278" width="1" height="615" fill="#e1e1e1"/>
<rect x="1865" y="278" width="1" height="615" fill="#e1e1e1"/>
<text x="5.50" y="292.7" font-family="Liberation Sans" font-size="12.5" fill="#0e6b38" textLength="6.95" lengthAdjust="spacingAndGlyphs">1</text>
<text x="5.50" y="312.7" font-family="Liberation Sans" font-size="12.5" fill="#0e6b38" textLength="6.95" lengthAdjust="spacingAndGlyphs">2</text>
<text x="5.50" y="332.7" font-family="Liberation Sans" font-size="12.5" fill="#0e6b38" textLength="6.95" lengthAdjust="spacingAndGlyphs">3</text>
<text x="5.50" y="352.7" font-family="Liberation Sans" font-size="12.5" fill="#444444" textLength="6.95" lengthAdjust="spacingAndGlyphs">4</text>
<text x="5.50" y="372.7" font-family="Liberation Sans" font-size="12.5" fill="#444444" textLength="6.95" lengthAdjust="spacingAndGlyphs">5</text>
<text x="5.50" y="392.7" font-family="Liberation Sans" font-size="12.5" fill="#444444" textLength="6.95" lengthAdjust="spacingAndGlyphs">6</text>
<text x="5.50" y="412.7" font-family="Liberation Sans" font-size="12.5" fill="#444444" textLength="6.95" lengthAdjust="spacingAndGlyphs">7</text>
<text x="5.50" y="432.7" font-family="Liberation Sans" font-size="12.5" fill="#444444" textLength="6.95" lengthAdjust="spacingAndGlyphs">8</text>
<text x="5.50" y="452.7" font-family="Liberation Sans" font-size="12.5" fill="#444444" textLength="6.95" lengthAdjust="spacingAndGlyphs">9</text>
<text x="2.02" y="472.7" font-family="Liberation Sans" font-size="12.5" fill="#444444" textLength="13.90" lengthAdjust="spacingAndGlyphs">10</text>
<text x="2.49" y="492.7" font-family="Liberation Sans" font-size="12.5" fill="#444444" textLength="12.98" lengthAdjust="spacingAndGlyphs">11</text>
<text x="2.02" y="512.7" font-family="Liberation Sans" font-size="12.5" fill="#444444" textLength="13.90" lengthAdjust="spacingAndGlyphs">12</text>
<text x="2.02" y="532.7" font-family="Liberation Sans" font-size="12.5" fill="#444444" textLength="13.90" lengthAdjust="spacingAndGlyphs">13</text>
<text x="2.02" y="552.7" font-family="Liberation Sans" font-size="12.5" fill="#444444" textLength="13.90" lengthAdjust="spacingAndGlyphs">14</text>
<text x="2.02" y="572.7" font-family="Liberation Sans" font-size="12.5" fill="#444444" textLength="13.90" lengthAdjust="spacingAndGlyphs">15</text>
<text x="2.02" y="592.7" font-family="Liberation Sans" font-size="12.5" fill="#444444" textLength="13.90" lengthAdjust="spacingAndGlyphs">16</text>
<text x="2.02" y="612.7" font-family="Liberation Sans" font-size="12.5" fill="#444444" textLength="13.90" lengthAdjust="spacingAndGlyphs">17</text>
<text x="2.02" y="632.7" font-family="Liberation Sans" font-size="12.5" fill="#444444" textLength="13.90" lengthAdjust="spacingAndGlyphs">18</text>
<text x="2.02" y="652.7" font-family="Liberation Sans" font-size="12.5" fill="#444444" textLength="13.90" lengthAdjust="spacingAndGlyphs">19</text>
<text x="2.02" y="672.7" font-family="Liberation Sans" font-size="12.5" fill="#444444" textLength="13.90" lengthAdjust="spacingAndGlyphs">20</text>
<text x="2.02" y="692.7" font-family="Liberation Sans" font-size="12.5" fill="#444444" textLength="13.90" lengthAdjust="spacingAndGlyphs">21</text>
<text x="2.02" y="712.7" font-family="Liberation Sans" font-size="12.5" fill="#444444" textLength="13.90" lengthAdjust="spacingAndGlyphs">22</text>
<text x="2.02" y="732.7" font-family="Liberation Sans" font-size="12.5" fill="#444444" textLength="13.90" lengthAdjust="spacingAndGlyphs">23</text>
<text x="2.02" y="752.7" font-family="Liberation Sans" font-size="12.5" fill="#444444" textLength="13.90" lengthAdjust="spacingAndGlyphs">24</text>
<text x="2.02" y="772.7" font-family="Liberation Sans" font-size="12.5" fill="#444444" textLength="13.90" lengthAdjust="spacingAndGlyphs">25</text>
<text x="2.02" y="792.7" font-family="Liberation Sans" font-size="12.5" fill="#444444" textLength="13.90" lengthAdjust="spacingAndGlyphs">26</text>
<text x="2.02" y="812.7" font-family="Liberation Sans" font-size="12.5" fill="#444444" textLength="13.90" lengthAdjust="spacingAndGlyphs">27</text>
<text x="2.02" y="832.7" font-family="Liberation Sans" font-size="12.5" fill="#444444" textLength="13.90" lengthAdjust="spacingAndGlyphs">28</text>
<text x="2.02" y="852.7" font-family="Liberation Sans" font-size="12.5" fill="#444444" textLength="13.90" lengthAdjust="spacingAndGlyphs">29</text>
<text x="2.02" y="872.7" font-family="Liberation Sans" font-size="12.5" fill="#444444" textLength="13.90" lengthAdjust="spacingAndGlyphs">30</text>
<text x="2.02" y="892.7" font-family="Liberation Sans" font-size="12.5" fill="#444444" textLength="13.90" lengthAdjust="spacingAndGlyphs">31</text>
<rect x="22" y="278" width="1776" height="60" fill="#d4d4d4" />
<rect x="238" y="297" width="632" height="1" fill="#000000"/>
<rect x="965" y="297" width="607" height="1" fill="#000000"/>
<rect x="792" y="317" width="173" height="1" fill="#000000"/>
<rect x="21" y="337" width="1551" height="1" fill="#000000"/>
<rect x="21" y="338" width="1551" height="1" fill="#8a8a8a"/>
<rect x="238" y="277" width="1" height="61" fill="#000000"/>
<rect x="394" y="277" width="1" height="61" fill="#000000"/>
<rect x="532" y="297" width="1" height="41" fill="#000000"/>
<rect x="792" y="297" width="1" height="41" fill="#000000"/>
<rect x="870" y="317" width="1" height="21" fill="#000000"/>
<rect x="965" y="277" width="1" height="61" fill="#000000"/>
<rect x="1129" y="277" width="1" height="61" fill="#000000"/>
<rect x="1346" y="277" width="1" height="61" fill="#000000"/>
<text x="123.50" y="312.3" font-family="Liberation Sans" font-size="13.6" font-weight="bold" fill="#000000" textLength="12.31" lengthAdjust="spacingAndGlyphs">id</text>
<text x="282.00" y="292.8" font-family="Liberation Sans" font-size="13.6" font-weight="bold" fill="#000000" textLength="68.79" lengthAdjust="spacingAndGlyphs">application</text>
<text x="299.40" y="322.2" font-family="Liberation Sans" font-size="13.6" font-weight="bold" fill="#000000" textLength="34.08" lengthAdjust="spacingAndGlyphs">name</text>
<text x="458.30" y="322.2" font-family="Liberation Sans" font-size="13.6" font-weight="bold" fill="#000000" textLength="12.21" lengthAdjust="spacingAndGlyphs">id</text>
<text x="658.50" y="292.8" font-family="Liberation Sans" font-size="13.6" font-weight="bold" fill="#000000" textLength="43.39" lengthAdjust="spacingAndGlyphs">invoice</text>
<text x="628.00" y="322.2" font-family="Liberation Sans" font-size="13.6" font-weight="bold" fill="#000000" textLength="69.99" lengthAdjust="spacingAndGlyphs">customerId</text>
<text x="840.00" y="312.3" font-family="Liberation Sans" font-size="13.6" font-weight="bold" fill="#000000" textLength="78.54" lengthAdjust="spacingAndGlyphs">totalAmount</text>
<text x="808.00" y="332.8" font-family="Liberation Sans" font-size="13.6" font-weight="bold" fill="#000000" textLength="47.15" lengthAdjust="spacingAndGlyphs">amount</text>
<text x="892.20" y="332.8" font-family="Liberation Sans" font-size="13.6" font-weight="bold" fill="#000000" textLength="52.00" lengthAdjust="spacingAndGlyphs">currency</text>
<text x="1018.30" y="292.8" font-family="Liberation Sans" font-size="13.6" font-weight="bold" fill="#000000" textLength="59.06" lengthAdjust="spacingAndGlyphs">processor</text>
<text x="1030.40" y="322.2" font-family="Liberation Sans" font-size="13.6" font-weight="bold" fill="#000000" textLength="34.18" lengthAdjust="spacingAndGlyphs">name</text>
<text x="1211.00" y="292.8" font-family="Liberation Sans" font-size="13.6" font-weight="bold" fill="#000000" textLength="54.54" lengthAdjust="spacingAndGlyphs">payment</text>
<text x="1231.50" y="322.2" font-family="Liberation Sans" font-size="13.6" font-weight="bold" fill="#000000" textLength="12.31" lengthAdjust="spacingAndGlyphs">id</text>
<text x="1442.20" y="292.8" font-family="Liberation Sans" font-size="13.6" font-weight="bold" fill="#000000" textLength="35.35" lengthAdjust="spacingAndGlyphs">result</text>
<text x="1440.90" y="322.2" font-family="Liberation Sans" font-size="13.6" font-weight="bold" fill="#000000" textLength="37.63" lengthAdjust="spacingAndGlyphs">status</text>
<text x="1655.00" y="312.3" font-family="Liberation Sans" font-size="13.6" font-weight="bold" fill="#000000" textLength="60.54" lengthAdjust="spacingAndGlyphs">createdAt</text>
<rect x="1573.5" y="278.5" width="223" height="58" fill="none" stroke="#ffffff" stroke-width="1"/>
<rect x="1572" y="277" width="227" height="61" fill="none" stroke="#217346" stroke-width="2.2"/>
<rect x="1795" y="334" width="7" height="7" fill="#ffffff" />
<rect x="1796" y="335" width="5" height="5" fill="#217346" />
<rect x="20" y="277" width="2" height="61" fill="#217346"/>
<g clip-path="url(#gridclip)">
<clipPath id="gridclip"><rect x="0" y="278" width="1890" height="615"/></clipPath>
<text x="24.50" y="372.7" font-family="Liberation Sans" font-size="12.6" stroke="#000" stroke-width="0.15" fill="#000" textLength="168.70" lengthAdjust="spacingAndGlyphs">668e60fe6a6659b63b028303</text>
<text x="241.30" y="372.7" font-family="Liberation Sans" font-size="12.6" stroke="#000" stroke-width="0.15" fill="#000" textLength="63.49" lengthAdjust="spacingAndGlyphs">COMPANY</text>
<text x="509.00" y="372.7" font-family="Liberation Sans" font-size="12.6" stroke="#000" stroke-width="0.15" fill="#000" textLength="20.90" lengthAdjust="spacingAndGlyphs">244</text>
<text x="535.20" y="372.7" font-family="Liberation Sans" font-size="12.6" stroke="#000" stroke-width="0.15" fill="#000" textLength="199.95" lengthAdjust="spacingAndGlyphs">zahonlijeanbaptiste@gmail.com</text>
<text x="833.22" y="372.7" font-family="Liberation Sans" font-size="12.6" stroke="#000" stroke-width="0.15" fill="#000" textLength="34.78" lengthAdjust="spacingAndGlyphs">12000</text>
<text x="872.90" y="372.7" font-family="Liberation Sans" font-size="12.6" stroke="#000" stroke-width="0.15" fill="#000" textLength="24.61" lengthAdjust="spacingAndGlyphs">XOF</text>
<text x="967.32" y="372.7" font-family="Liberation Sans" font-size="12.6" stroke="#000" stroke-width="0.15" fill="#000" textLength="32.62" lengthAdjust="spacingAndGlyphs">Mock</text>
<text x="1132.40" y="372.7" font-family="Liberation Sans" font-size="12.6" stroke="#000" stroke-width="0.15" fill="#000" textLength="169.42" lengthAdjust="spacingAndGlyphs">668e60fe6a6659b63b028302</text>
<text x="1349.00" y="372.7" font-family="Liberation Sans" font-size="12.6" stroke="#000" stroke-width="0.15" fill="#000" textLength="73.99" lengthAdjust="spacingAndGlyphs">COMPLETED</text>
<text x="1575.60" y="372.7" font-family="Liberation Sans" font-size="12.6" stroke="#000" stroke-width="0.15" fill="#000" textLength="161.60" lengthAdjust="spacingAndGlyphs">2024-07-10T10:22:54+00:00</text>
<text x="24.50" y="392.7" font-family="Liberation Sans" font-size="12.6" stroke="#000" stroke-width="0.15" fill="#000" textLength="171.68" lengthAdjust="spacingAndGlyphs">668e672e2826d27ae501bb82</text>
<text x="241.30" y="392.7" font-family="Liberation Sans" font-size="12.6" stroke="#000" stroke-width="0.15" fill="#000" textLength="63.49" lengthAdjust="spacingAndGlyphs">COMPANY</text>
<text x="509.00" y="392.7" font-family="Liberation Sans" font-size="12.6" stroke="#000" stroke-width="0.15" fill="#000" textLength="20.90" lengthAdjust="spacingAndGlyphs">249</text>
<text x="535.20" y="392.7" font-family="Liberation Sans" font-size="12.6" stroke="#000" stroke-width="0.15" fill="#000" textLength="199.95" lengthAdjust="spacingAndGlyphs">zahonlijeanbaptiste@gmail.com</text>
<text x="833.22" y="392.7" font-family="Liberation Sans" font-size="12.6" stroke="#000" stroke-width="0.15" fill="#000" textLength="34.78" lengthAdjust="spacingAndGlyphs">12000</text>
<text x="872.90" y="392.7" font-family="Liberation Sans" font-size="12.6" stroke="#000" stroke-width="0.15" fill="#000" textLength="24.61" lengthAdjust="spacingAndGlyphs">XOF</text>
<text x="967.32" y="392.7" font-family="Liberation Sans" font-size="12.6" stroke="#000" stroke-width="0.15" fill="#000" textLength="32.62" lengthAdjust="spacingAndGlyphs">Mock</text>
<text x="1132.40" y="392.7" font-family="Liberation Sans" font-size="12.6" stroke="#000" stroke-width="0.15" fill="#000" textLength="169.82" lengthAdjust="spacingAndGlyphs">668e672e92b0627f73034d02</text>
<text x="1349.00" y="392.7" font-family="Liberation Sans" font-size="12.6" stroke="#000" stroke-width="0.15" fill="#000" textLength="73.99" lengthAdjust="spacingAndGlyphs">COMPLETED</text>
<text x="1575.60" y="392.7" font-family="Liberation Sans" font-size="12.6" stroke="#000" stroke-width="0.15" fill="#000" textLength="161.60" lengthAdjust="spacingAndGlyphs">2024-07-10T10:49:18+00:00</text>
<text x="24.50" y="412.7" font-family="Liberation Sans" font-size="12.6" stroke="#000" stroke-width="0.15" fill="#000" textLength="168.51" lengthAdjust="spacingAndGlyphs">668e6db81c8cc5a06d0d7e13</text>
<text x="241.30" y="412.7" font-family="Liberation Sans" font-size="12.6" stroke="#000" stroke-width="0.15" fill="#000" textLength="63.49" lengthAdjust="spacingAndGlyphs">COMPANY</text>
<text x="509.00" y="412.7" font-family="Liberation Sans" font-size="12.6" stroke="#000" stroke-width="0.15" fill="#000" textLength="20.90" lengthAdjust="spacingAndGlyphs">250</text>
<text x="535.20" y="412.7" font-family="Liberation Sans" font-size="12.6" stroke="#000" stroke-width="0.15" fill="#000" textLength="199.95" lengthAdjust="spacingAndGlyphs">zahonlijeanbaptiste@gmail.com</text>
<text x="833.22" y="412.7" font-family="Liberation Sans" font-size="12.6" stroke="#000" stroke-width="0.15" fill="#000" textLength="34.78" lengthAdjust="spacingAndGlyphs">42500</text>
<text x="872.90" y="412.7" font-family="Liberation Sans" font-size="12.6" stroke="#000" stroke-width="0.15" fill="#000" textLength="24.61" lengthAdjust="spacingAndGlyphs">XOF</text>
<text x="967.32" y="412.7" font-family="Liberation Sans" font-size="12.6" stroke="#000" stroke-width="0.15" fill="#000" textLength="32.62" lengthAdjust="spacingAndGlyphs">Mock</text>
<text x="1132.40" y="412.7" font-family="Liberation Sans" font-size="12.6" stroke="#000" stroke-width="0.15" fill="#000" textLength="169.22" lengthAdjust="spacingAndGlyphs">668e6db81c8cc5a06d0d7e12</text>
<text x="1349.00" y="412.7" font-family="Liberation Sans" font-size="12.6" stroke="#000" stroke-width="0.15" fill="#000" textLength="73.99" lengthAdjust="spacingAndGlyphs">COMPLETED</text>
<text x="1575.60" y="412.7" font-family="Liberation Sans" font-size="12.6" stroke="#000" stroke-width="0.15" fill="#000" textLength="161.60" lengthAdjust="spacingAndGlyphs">2024-07-10T11:17:12+00:00</text>
<text x="24.50" y="432.7" font-family="Liberation Sans" font-size="12.6" stroke="#000" stroke-width="0.15" fill="#000" textLength="165.44" lengthAdjust="spacingAndGlyphs">668e717157b5fbc9f501d703</text>
<text x="241.30" y="432.7" font-family="Liberation Sans" font-size="12.6" stroke="#000" stroke-width="0.15" fill="#000" textLength="63.49" lengthAdjust="spacingAndGlyphs">COMPANY</text>
<text x="509.00" y="432.7" font-family="Liberation Sans" font-size="12.6" stroke="#000" stroke-width="0.15" fill="#000" textLength="20.90" lengthAdjust="spacingAndGlyphs">252</text>
<text x="535.20" y="432.7" font-family="Liberation Sans" font-size="12.6" stroke="#000" stroke-width="0.15" fill="#000" textLength="199.95" lengthAdjust="spacingAndGlyphs">zahonlijeanbaptiste@gmail.com</text>
<text x="833.22" y="432.7" font-family="Liberation Sans" font-size="12.6" stroke="#000" stroke-width="0.15" fill="#000" textLength="34.78" lengthAdjust="spacingAndGlyphs">95000</text>
<text x="872.90" y="432.7" font-family="Liberation Sans" font-size="12.6" stroke="#000" stroke-width="0.15" fill="#000" textLength="24.61" lengthAdjust="spacingAndGlyphs">XOF</text>
<text x="967.32" y="432.7" font-family="Liberation Sans" font-size="12.6" stroke="#000" stroke-width="0.15" fill="#000" textLength="32.62" lengthAdjust="spacingAndGlyphs">Mock</text>
<text x="1132.40" y="432.7" font-family="Liberation Sans" font-size="12.6" stroke="#000" stroke-width="0.15" fill="#000" textLength="166.15" lengthAdjust="spacingAndGlyphs">668e717157b5fbc9f501d702</text>
<text x="1349.00" y="432.7" font-family="Liberation Sans" font-size="12.6" stroke="#000" stroke-width="0.15" fill="#000" textLength="73.99" lengthAdjust="spacingAndGlyphs">COMPLETED</text>
<text x="1575.60" y="432.7" font-family="Liberation Sans" font-size="12.6" stroke="#000" stroke-width="0.15" fill="#000" textLength="161.60" lengthAdjust="spacingAndGlyphs">2024-07-10T11:33:05+00:00</text>
<text x="24.50" y="452.7" font-family="Liberation Sans" font-size="12.6" stroke="#000" stroke-width="0.15" fill="#000" textLength="169.34" lengthAdjust="spacingAndGlyphs">668e72bd230041b8f00ab202</text>
<text x="241.30" y="452.7" font-family="Liberation Sans" font-size="12.6" stroke="#000" stroke-width="0.15" fill="#000" textLength="63.49" lengthAdjust="spacingAndGlyphs">COMPANY</text>
<text x="509.00" y="452.7" font-family="Liberation Sans" font-size="12.6" stroke="#000" stroke-width="0.15" fill="#000" textLength="20.90" lengthAdjust="spacingAndGlyphs">253</text>
<text x="535.20" y="452.7" font-family="Liberation Sans" font-size="12.6" stroke="#000" stroke-width="0.15" fill="#000" textLength="199.95" lengthAdjust="spacingAndGlyphs">zahonlijeanbaptiste@gmail.com</text>
<text x="833.22" y="452.7" font-family="Liberation Sans" font-size="12.6" stroke="#000" stroke-width="0.15" fill="#000" textLength="34.78" lengthAdjust="spacingAndGlyphs">70000</text>
<text x="872.90" y="452.7" font-family="Liberation Sans" font-size="12.6" stroke="#000" stroke-width="0.15" fill="#000" textLength="24.61" lengthAdjust="spacingAndGlyphs">XOF</text>
<text x="967.32" y="452.7" font-family="Liberation Sans" font-size="12.6" stroke="#000" stroke-width="0.15" fill="#000" textLength="32.62" lengthAdjust="spacingAndGlyphs">Mock</text>
<text x="1132.40" y="452.7" font-family="Liberation Sans" font-size="12.6" stroke="#000" stroke-width="0.15" fill="#000" textLength="164.59" lengthAdjust="spacingAndGlyphs">668e72adc62738aefe035f02</text>
<text x="1348.10" y="452.7" font-family="Liberation Sans" font-size="12.6" stroke="#000" stroke-width="0.15" fill="#000" textLength="62.49" lengthAdjust="spacingAndGlyphs">REVERSED</text>
<text x="1575.60" y="452.7" font-family="Liberation Sans" font-size="12.6" stroke="#000" stroke-width="0.15" fill="#000" textLength="161.60" lengthAdjust="spacingAndGlyphs">2024-07-10T11:38:37+00:00</text>
<text x="24.50" y="472.7" font-family="Liberation Sans" font-size="12.6" stroke="#000" stroke-width="0.15" fill="#000" textLength="162.42" lengthAdjust="spacingAndGlyphs">668e72cfc4f304c51a084db2</text>
<text x="241.30" y="472.7" font-family="Liberation Sans" font-size="12.6" stroke="#000" stroke-width="0.15" fill="#000" textLength="63.49" lengthAdjust="spacingAndGlyphs">COMPANY</text>
<text x="509.00" y="472.7" font-family="Liberation Sans" font-size="12.6" stroke="#000" stroke-width="0.15" fill="#000" textLength="20.90" lengthAdjust="spacingAndGlyphs">253</text>
<text x="535.20" y="472.7" font-family="Liberation Sans" font-size="12.6" stroke="#000" stroke-width="0.15" fill="#000" textLength="199.95" lengthAdjust="spacingAndGlyphs">zahonlijeanbaptiste@gmail.com</text>
<text x="833.22" y="472.7" font-family="Liberation Sans" font-size="12.6" stroke="#000" stroke-width="0.15" fill="#000" textLength="34.78" lengthAdjust="spacingAndGlyphs">70000</text>
<text x="872.90" y="472.7" font-family="Liberation Sans" font-size="12.6" stroke="#000" stroke-width="0.15" fill="#000" textLength="24.61" lengthAdjust="spacingAndGlyphs">XOF</text>
<text x="967.32" y="472.7" font-family="Liberation Sans" font-size="12.6" stroke="#000" stroke-width="0.15" fill="#000" textLength="32.62" lengthAdjust="spacingAndGlyphs">Mock</text>
<text x="1132.40" y="472.7" font-family="Liberation Sans" font-size="12.6" stroke="#000" stroke-width="0.15" fill="#000" textLength="164.59" lengthAdjust="spacingAndGlyphs">668e72adc62738aefe035f02</text>
<text x="1349.00" y="472.7" font-family="Liberation Sans" font-size="12.6" stroke="#000" stroke-width="0.15" fill="#000" textLength="64.09" lengthAdjust="spacingAndGlyphs">CANCELED</text>
<text x="1575.60" y="472.7" font-family="Liberation Sans" font-size="12.6" stroke="#000" stroke-width="0.15" fill="#000" textLength="161.60" lengthAdjust="spacingAndGlyphs">2024-07-10T11:38:55+00:00</text>
<text x="24.50" y="492.7" font-family="Liberation Sans" font-size="12.6" stroke="#000" stroke-width="0.15" fill="#000" textLength="167.79" lengthAdjust="spacingAndGlyphs">668e72d763662039730c23f2</text>
<text x="241.30" y="492.7" font-family="Liberation Sans" font-size="12.6" stroke="#000" stroke-width="0.15" fill="#000" textLength="63.49" lengthAdjust="spacingAndGlyphs">COMPANY</text>
<text x="509.00" y="492.7" font-family="Liberation Sans" font-size="12.6" stroke="#000" stroke-width="0.15" fill="#000" textLength="20.90" lengthAdjust="spacingAndGlyphs">253</text>
<text x="535.20" y="492.7" font-family="Liberation Sans" font-size="12.6" stroke="#000" stroke-width="0.15" fill="#000" textLength="199.95" lengthAdjust="spacingAndGlyphs">zahonlijeanbaptiste@gmail.com</text>
<text x="833.22" y="492.7" font-family="Liberation Sans" font-size="12.6" stroke="#000" stroke-width="0.15" fill="#000" textLength="34.78" lengthAdjust="spacingAndGlyphs">70000</text>
<text x="872.90" y="492.7" font-family="Liberation Sans" font-size="12.6" stroke="#000" stroke-width="0.15" fill="#000" textLength="24.61" lengthAdjust="spacingAndGlyphs">XOF</text>
<text x="967.32" y="492.7" font-family="Liberation Sans" font-size="12.6" stroke="#000" stroke-width="0.15" fill="#000" textLength="32.62" lengthAdjust="spacingAndGlyphs">Mock</text>
<text x="1132.40" y="492.7" font-family="Liberation Sans" font-size="12.6" stroke="#000" stroke-width="0.15" fill="#000" textLength="164.59" lengthAdjust="spacingAndGlyphs">668e72adc62738aefe035f02</text>
<text x="1349.00" y="492.7" font-family="Liberation Sans" font-size="12.6" stroke="#000" stroke-width="0.15" fill="#000" textLength="73.99" lengthAdjust="spacingAndGlyphs">COMPLETED</text>
<text x="1575.60" y="492.7" font-family="Liberation Sans" font-size="12.6" stroke="#000" stroke-width="0.15" fill="#000" textLength="161.60" lengthAdjust="spacingAndGlyphs">2024-07-10T11:39:03+00:00</text>
<text x="24.50" y="512.7" font-family="Liberation Sans" font-size="12.6" stroke="#000" stroke-width="0.15" fill="#000" textLength="165.08" lengthAdjust="spacingAndGlyphs">668f9f685e526700a40435a3</text>
<text x="241.30" y="512.7" font-family="Liberation Sans" font-size="12.6" stroke="#000" stroke-width="0.15" fill="#000" textLength="63.49" lengthAdjust="spacingAndGlyphs">COMPANY</text>
<text x="509.00" y="512.7" font-family="Liberation Sans" font-size="12.6" stroke="#000" stroke-width="0.15" fill="#000" textLength="20.90" lengthAdjust="spacingAndGlyphs">254</text>
<text x="535.20" y="512.7" font-family="Liberation Sans" font-size="12.6" stroke="#000" stroke-width="0.15" fill="#000" textLength="199.95" lengthAdjust="spacingAndGlyphs">zahonlijeanbaptiste@gmail.com</text>
<text x="833.22" y="512.7" font-family="Liberation Sans" font-size="12.6" stroke="#000" stroke-width="0.15" fill="#000" textLength="34.78" lengthAdjust="spacingAndGlyphs">42500</text>
<text x="872.90" y="512.7" font-family="Liberation Sans" font-size="12.6" stroke="#000" stroke-width="0.15" fill="#000" textLength="24.61" lengthAdjust="spacingAndGlyphs">XOF</text>
<text x="967.32" y="512.7" font-family="Liberation Sans" font-size="12.6" stroke="#000" stroke-width="0.15" fill="#000" textLength="32.62" lengthAdjust="spacingAndGlyphs">Mock</text>
<text x="1132.40" y="512.7" font-family="Liberation Sans" font-size="12.6" stroke="#000" stroke-width="0.15" fill="#000" textLength="165.78" lengthAdjust="spacingAndGlyphs">668f9f685e526700a40435a2</text>
<text x="1348.02" y="512.7" font-family="Liberation Sans" font-size="12.6" stroke="#000" stroke-width="0.15" fill="#000" textLength="42.68" lengthAdjust="spacingAndGlyphs">FAILED</text>
<text x="1575.60" y="512.7" font-family="Liberation Sans" font-size="12.6" stroke="#000" stroke-width="0.15" fill="#000" textLength="161.60" lengthAdjust="spacingAndGlyphs">2024-07-11T09:01:28+00:00</text>
<text x="24.50" y="532.7" font-family="Liberation Sans" font-size="12.6" stroke="#000" stroke-width="0.15" fill="#000" textLength="165.33" lengthAdjust="spacingAndGlyphs">668f9f6b5e526700a40435a4</text>
<text x="241.30" y="532.7" font-family="Liberation Sans" font-size="12.6" stroke="#000" stroke-width="0.15" fill="#000" textLength="63.49" lengthAdjust="spacingAndGlyphs">COMPANY</text>
<text x="509.00" y="532.7" font-family="Liberation Sans" font-size="12.6" stroke="#000" stroke-width="0.15" fill="#000" textLength="20.90" lengthAdjust="spacingAndGlyphs">254</text>
<text x="535.20" y="532.7" font-family="Liberation Sans" font-size="12.6" stroke="#000" stroke-width="0.15" fill="#000" textLength="199.95" lengthAdjust="spacingAndGlyphs">zahonlijeanbaptiste@gmail.com</text>
<text x="833.22" y="532.7" font-family="Liberation Sans" font-size="12.6" stroke="#000" stroke-width="0.15" fill="#000" textLength="34.78" lengthAdjust="spacingAndGlyphs">42500</text>
<text x="872.90" y="532.7" font-family="Liberation Sans" font-size="12.6" stroke="#000" stroke-width="0.15" fill="#000" textLength="24.61" lengthAdjust="spacingAndGlyphs">XOF</text>
<text x="967.32" y="532.7" font-family="Liberation Sans" font-size="12.6" stroke="#000" stroke-width="0.15" fill="#000" textLength="32.62" lengthAdjust="spacingAndGlyphs">Mock</text>
<text x="1132.40" y="532.7" font-family="Liberation Sans" font-size="12.6" stroke="#000" stroke-width="0.15" fill="#000" textLength="165.78" lengthAdjust="spacingAndGlyphs">668f9f685e526700a40435a2</text>
<text x="1348.02" y="532.7" font-family="Liberation Sans" font-size="12.6" stroke="#000" stroke-width="0.15" fill="#000" textLength="42.68" lengthAdjust="spacingAndGlyphs">FAILED</text>
<text x="1575.60" y="532.7" font-family="Liberation Sans" font-size="12.6" stroke="#000" stroke-width="0.15" fill="#000" textLength="161.60" lengthAdjust="spacingAndGlyphs">2024-07-11T09:01:31+00:00</text>
<text x="24.50" y="552.7" font-family="Liberation Sans" font-size="12.6" stroke="#000" stroke-width="0.15" fill="#000" textLength="160.42" lengthAdjust="spacingAndGlyphs">668f9f762ed07f2452002f92</text>
<text x="241.30" y="552.7" font-family="Liberation Sans" font-size="12.6" stroke="#000" stroke-width="0.15" fill="#000" textLength="63.49" lengthAdjust="spacingAndGlyphs">COMPANY</text>
<text x="509.00" y="552.7" font-family="Liberation Sans" font-size="12.6" stroke="#000" stroke-width="0.15" fill="#000" textLength="20.90" lengthAdjust="spacingAndGlyphs">254</text>
<text x="535.20" y="552.7" font-family="Liberation Sans" font-size="12.6" stroke="#000" stroke-width="0.15" fill="#000" textLength="199.95" lengthAdjust="spacingAndGlyphs">zahonlijeanbaptiste@gmail.com</text>
<text x="833.22" y="552.7" font-family="Liberation Sans" font-size="12.6" stroke="#000" stroke-width="0.15" fill="#000" textLength="34.78" lengthAdjust="spacingAndGlyphs">42500</text>
<text x="872.90" y="552.7" font-family="Liberation Sans" font-size="12.6" stroke="#000" stroke-width="0.15" fill="#000" textLength="24.61" lengthAdjust="spacingAndGlyphs">XOF</text>
<text x="967.32" y="552.7" font-family="Liberation Sans" font-size="12.6" stroke="#000" stroke-width="0.15" fill="#000" textLength="32.62" lengthAdjust="spacingAndGlyphs">Mock</text>
<text x="1132.40" y="552.7" font-family="Liberation Sans" font-size="12.6" stroke="#000" stroke-width="0.15" fill="#000" textLength="165.78" lengthAdjust="spacingAndGlyphs">668f9f685e526700a40435a2</text>
<text x="1349.00" y="552.7" font-family="Liberation Sans" font-size="12.6" stroke="#000" stroke-width="0.15" fill="#000" textLength="73.99" lengthAdjust="spacingAndGlyphs">COMPLETED</text>
<text x="1575.60" y="552.7" font-family="Liberation Sans" font-size="12.6" stroke="#000" stroke-width="0.15" fill="#000" textLength="161.60" lengthAdjust="spacingAndGlyphs">2024-07-11T09:01:42+00:00</text>
<text x="24.50" y="572.7" font-family="Liberation Sans" font-size="12.6" stroke="#000" stroke-width="0.15" fill="#000" textLength="165.06" lengthAdjust="spacingAndGlyphs">6690120c95df5194090f9363</text>
<text x="241.30" y="572.7" font-family="Liberation Sans" font-size="12.6" stroke="#000" stroke-width="0.15" fill="#000" textLength="63.49" lengthAdjust="spacingAndGlyphs">COMPANY</text>
<text x="509.00" y="572.7" font-family="Liberation Sans" font-size="12.6" stroke="#000" stroke-width="0.15" fill="#000" textLength="20.90" lengthAdjust="spacingAndGlyphs">255</text>
<text x="535.20" y="572.7" font-family="Liberation Sans" font-size="12.6" stroke="#000" stroke-width="0.15" fill="#000" textLength="199.95" lengthAdjust="spacingAndGlyphs">zahonlijeanbaptiste@gmail.com</text>
<text x="833.22" y="572.7" font-family="Liberation Sans" font-size="12.6" stroke="#000" stroke-width="0.15" fill="#000" textLength="34.78" lengthAdjust="spacingAndGlyphs">70000</text>
<text x="872.90" y="572.7" font-family="Liberation Sans" font-size="12.6" stroke="#000" stroke-width="0.15" fill="#000" textLength="24.61" lengthAdjust="spacingAndGlyphs">XOF</text>
<text x="967.32" y="572.7" font-family="Liberation Sans" font-size="12.6" stroke="#000" stroke-width="0.15" fill="#000" textLength="32.62" lengthAdjust="spacingAndGlyphs">Mock</text>
<text x="1132.40" y="572.7" font-family="Liberation Sans" font-size="12.6" stroke="#000" stroke-width="0.15" fill="#000" textLength="165.76" lengthAdjust="spacingAndGlyphs">6690120c95df5194090f9362</text>
<text x="1348.10" y="572.7" font-family="Liberation Sans" font-size="12.6" stroke="#000" stroke-width="0.15" fill="#000" textLength="62.49" lengthAdjust="spacingAndGlyphs">REVERSED</text>
<text x="1575.60" y="572.7" font-family="Liberation Sans" font-size="12.6" stroke="#000" stroke-width="0.15" fill="#000" textLength="161.60" lengthAdjust="spacingAndGlyphs">2024-07-11T17:10:36+00:00</text>
<text x="24.50" y="592.7" font-family="Liberation Sans" font-size="12.6" stroke="#000" stroke-width="0.15" fill="#000" textLength="172.08" lengthAdjust="spacingAndGlyphs">66901214eb8286162d016932</text>
<text x="241.30" y="592.7" font-family="Liberation Sans" font-size="12.6" stroke="#000" stroke-width="0.15" fill="#000" textLength="63.49" lengthAdjust="spacingAndGlyphs">COMPANY</text>
<text x="509.00" y="592.7" font-family="Liberation Sans" font-size="12.6" stroke="#000" stroke-width="0.15" fill="#000" textLength="20.90" lengthAdjust="spacingAndGlyphs">255</text>
<text x="535.20" y="592.7" font-family="Liberation Sans" font-size="12.6" stroke="#000" stroke-width="0.15" fill="#000" textLength="199.95" lengthAdjust="spacingAndGlyphs">zahonlijeanbaptiste@gmail.com</text>
<text x="833.22" y="592.7" font-family="Liberation Sans" font-size="12.6" stroke="#000" stroke-width="0.15" fill="#000" textLength="34.78" lengthAdjust="spacingAndGlyphs">70000</text>
<text x="872.90" y="592.7" font-family="Liberation Sans" font-size="12.6" stroke="#000" stroke-width="0.15" fill="#000" textLength="24.61" lengthAdjust="spacingAndGlyphs">XOF</text>
<text x="967.32" y="592.7" font-family="Liberation Sans" font-size="12.6" stroke="#000" stroke-width="0.15" fill="#000" textLength="32.62" lengthAdjust="spacingAndGlyphs">Mock</text>
<text x="1132.40" y="592.7" font-family="Liberation Sans" font-size="12.6" stroke="#000" stroke-width="0.15" fill="#000" textLength="165.76" lengthAdjust="spacingAndGlyphs">6690120c95df5194090f9362</text>
<text x="1349.00" y="592.7" font-family="Liberation Sans" font-size="12.6" stroke="#000" stroke-width="0.15" fill="#000" textLength="73.99" lengthAdjust="spacingAndGlyphs">COMPLETED</text>
<text x="1575.60" y="592.7" font-family="Liberation Sans" font-size="12.6" stroke="#000" stroke-width="0.15" fill="#000" textLength="161.60" lengthAdjust="spacingAndGlyphs">2024-07-11T17:10:44+00:00</text>
<text x="24.50" y="612.7" font-family="Liberation Sans" font-size="12.6" stroke="#000" stroke-width="0.15" fill="#000" textLength="168.18" lengthAdjust="spacingAndGlyphs">6690eae53f7d91267604aed3</text>
<text x="241.30" y="612.7" font-family="Liberation Sans" font-size="12.6" stroke="#000" stroke-width="0.15" fill="#000" textLength="63.49" lengthAdjust="spacingAndGlyphs">COMPANY</text>
<text x="509.00" y="612.7" font-family="Liberation Sans" font-size="12.6" stroke="#000" stroke-width="0.15" fill="#000" textLength="20.90" lengthAdjust="spacingAndGlyphs">256</text>
<text x="535.20" y="612.7" font-family="Liberation Sans" font-size="12.6" stroke="#000" stroke-width="0.15" fill="#000" textLength="199.95" lengthAdjust="spacingAndGlyphs">zahonlijeanbaptiste@gmail.com</text>
<text x="826.26" y="612.7" font-family="Liberation Sans" font-size="12.6" stroke="#000" stroke-width="0.15" fill="#000" textLength="41.74" lengthAdjust="spacingAndGlyphs">285000</text>
<text x="872.90" y="612.7" font-family="Liberation Sans" font-size="12.6" stroke="#000" stroke-width="0.15" fill="#000" textLength="24.61" lengthAdjust="spacingAndGlyphs">XOF</text>
<text x="967.32" y="612.7" font-family="Liberation Sans" font-size="12.6" stroke="#000" stroke-width="0.15" fill="#000" textLength="32.62" lengthAdjust="spacingAndGlyphs">Mock</text>
<text x="1132.40" y="612.7" font-family="Liberation Sans" font-size="12.6" stroke="#000" stroke-width="0.15" fill="#000" textLength="168.90" lengthAdjust="spacingAndGlyphs">6690eae53f7d91267604aed2</text>
<text x="1349.00" y="612.7" font-family="Liberation Sans" font-size="12.6" stroke="#000" stroke-width="0.15" fill="#000" textLength="73.99" lengthAdjust="spacingAndGlyphs">COMPLETED</text>
<text x="1575.60" y="612.7" font-family="Liberation Sans" font-size="12.6" stroke="#000" stroke-width="0.15" fill="#000" textLength="161.60" lengthAdjust="spacingAndGlyphs">2024-07-12T08:35:49+00:00</text>
<text x="24.50" y="632.7" font-family="Liberation Sans" font-size="12.6" stroke="#000" stroke-width="0.15" fill="#000" textLength="162.71" lengthAdjust="spacingAndGlyphs">6690ebc4865fea65ae053cf3</text>
<text x="241.30" y="632.7" font-family="Liberation Sans" font-size="12.6" stroke="#000" stroke-width="0.15" fill="#000" textLength="63.49" lengthAdjust="spacingAndGlyphs">COMPANY</text>
<text x="509.00" y="632.7" font-family="Liberation Sans" font-size="12.6" stroke="#000" stroke-width="0.15" fill="#000" textLength="20.90" lengthAdjust="spacingAndGlyphs">257</text>
<text x="535.20" y="632.7" font-family="Liberation Sans" font-size="12.6" stroke="#000" stroke-width="0.15" fill="#000" textLength="199.95" lengthAdjust="spacingAndGlyphs">zahonlijeanbaptiste@gmail.com</text>
<text x="819.31" y="632.7" font-family="Liberation Sans" font-size="12.6" stroke="#000" stroke-width="0.15" fill="#000" textLength="48.70" lengthAdjust="spacingAndGlyphs">2520000</text>
<text x="872.90" y="632.7" font-family="Liberation Sans" font-size="12.6" stroke="#000" stroke-width="0.15" fill="#000" textLength="24.61" lengthAdjust="spacingAndGlyphs">XOF</text>
<text x="967.32" y="632.7" font-family="Liberation Sans" font-size="12.6" stroke="#000" stroke-width="0.15" fill="#000" textLength="32.62" lengthAdjust="spacingAndGlyphs">Mock</text>
<text x="1132.40" y="632.7" font-family="Liberation Sans" font-size="12.6" stroke="#000" stroke-width="0.15" fill="#000" textLength="163.40" lengthAdjust="spacingAndGlyphs">6690ebc4865fea65ae053cf2</text>
<text x="1349.00" y="632.7" font-family="Liberation Sans" font-size="12.6" stroke="#000" stroke-width="0.15" fill="#000" textLength="73.99" lengthAdjust="spacingAndGlyphs">COMPLETED</text>
<text x="1575.60" y="632.7" font-family="Liberation Sans" font-size="12.6" stroke="#000" stroke-width="0.15" fill="#000" textLength="161.60" lengthAdjust="spacingAndGlyphs">2024-07-12T08:39:32+00:00</text>
<text x="24.50" y="652.7" font-family="Liberation Sans" font-size="12.6" stroke="#000" stroke-width="0.15" fill="#000" textLength="166.59" lengthAdjust="spacingAndGlyphs">6690ec1291d0ce8f230bd5a3</text>
<text x="241.30" y="652.7" font-family="Liberation Sans" font-size="12.6" stroke="#000" stroke-width="0.15" fill="#000" textLength="63.49" lengthAdjust="spacingAndGlyphs">COMPANY</text>
<text x="509.00" y="652.7" font-family="Liberation Sans" font-size="12.6" stroke="#000" stroke-width="0.15" fill="#000" textLength="20.90" lengthAdjust="spacingAndGlyphs">248</text>
<text x="535.20" y="652.7" font-family="Liberation Sans" font-size="12.6" stroke="#000" stroke-width="0.15" fill="#000" textLength="199.95" lengthAdjust="spacingAndGlyphs">zahonlijeanbaptiste@gmail.com</text>
<text x="826.26" y="652.7" font-family="Liberation Sans" font-size="12.6" stroke="#000" stroke-width="0.15" fill="#000" textLength="41.74" lengthAdjust="spacingAndGlyphs">136500</text>
<text x="872.90" y="652.7" font-family="Liberation Sans" font-size="12.6" stroke="#000" stroke-width="0.15" fill="#000" textLength="24.61" lengthAdjust="spacingAndGlyphs">XOF</text>
<text x="967.32" y="652.7" font-family="Liberation Sans" font-size="12.6" stroke="#000" stroke-width="0.15" fill="#000" textLength="32.62" lengthAdjust="spacingAndGlyphs">Mock</text>
<text x="1132.40" y="652.7" font-family="Liberation Sans" font-size="12.6" stroke="#000" stroke-width="0.15" fill="#000" textLength="167.30" lengthAdjust="spacingAndGlyphs">6690ec1291d0ce8f230bd5a2</text>
<text x="1348.02" y="652.7" font-family="Liberation Sans" font-size="12.6" stroke="#000" stroke-width="0.15" fill="#000" textLength="42.68" lengthAdjust="spacingAndGlyphs">FAILED</text>
<text x="1575.60" y="652.7" font-family="Liberation Sans" font-size="12.6" stroke="#000" stroke-width="0.15" fill="#000" textLength="161.60" lengthAdjust="spacingAndGlyphs">2024-07-12T08:40:50+00:00</text>
<text x="24.50" y="672.7" font-family="Liberation Sans" font-size="12.6" stroke="#000" stroke-width="0.15" fill="#000" textLength="166.59" lengthAdjust="spacingAndGlyphs">6690ec1391d0ce8f230bd5a4</text>
<text x="241.30" y="672.7" font-family="Liberation Sans" font-size="12.6" stroke="#000" stroke-width="0.15" fill="#000" textLength="63.49" lengthAdjust="spacingAndGlyphs">COMPANY</text>
<text x="509.00" y="672.7" font-family="Liberation Sans" font-size="12.6" stroke="#000" stroke-width="0.15" fill="#000" textLength="20.90" lengthAdjust="spacingAndGlyphs">248</text>
<text x="535.20" y="672.7" font-family="Liberation Sans" font-size="12.6" stroke="#000" stroke-width="0.15" fill="#000" textLength="199.95" lengthAdjust="spacingAndGlyphs">zahonlijeanbaptiste@gmail.com</text>
<text x="826.26" y="672.7" font-family="Liberation Sans" font-size="12.6" stroke="#000" stroke-width="0.15" fill="#000" textLength="41.74" lengthAdjust="spacingAndGlyphs">136500</text>
<text x="872.90" y="672.7" font-family="Liberation Sans" font-size="12.6" stroke="#000" stroke-width="0.15" fill="#000" textLength="24.61" lengthAdjust="spacingAndGlyphs">XOF</text>
<text x="967.32" y="672.7" font-family="Liberation Sans" font-size="12.6" stroke="#000" stroke-width="0.15" fill="#000" textLength="32.62" lengthAdjust="spacingAndGlyphs">Mock</text>
<text x="1132.40" y="672.7" font-family="Liberation Sans" font-size="12.6" stroke="#000" stroke-width="0.15" fill="#000" textLength="167.30" lengthAdjust="spacingAndGlyphs">6690ec1291d0ce8f230bd5a2</text>
<text x="1348.02" y="672.7" font-family="Liberation Sans" font-size="12.6" stroke="#000" stroke-width="0.15" fill="#000" textLength="42.68" lengthAdjust="spacingAndGlyphs">FAILED</text>
<text x="1575.60" y="672.7" font-family="Liberation Sans" font-size="12.6" stroke="#000" stroke-width="0.15" fill="#000" textLength="161.60" lengthAdjust="spacingAndGlyphs">2024-07-12T08:40:51+00:00</text>
<text x="24.50" y="692.7" font-family="Liberation Sans" font-size="12.6" stroke="#000" stroke-width="0.15" fill="#000" textLength="168.00" lengthAdjust="spacingAndGlyphs">6690ec1a0c8b9c48eb088122</text>
<text x="241.30" y="692.7" font-family="Liberation Sans" font-size="12.6" stroke="#000" stroke-width="0.15" fill="#000" textLength="63.49" lengthAdjust="spacingAndGlyphs">COMPANY</text>
<text x="509.00" y="692.7" font-family="Liberation Sans" font-size="12.6" stroke="#000" stroke-width="0.15" fill="#000" textLength="20.90" lengthAdjust="spacingAndGlyphs">248</text>
<text x="535.20" y="692.7" font-family="Liberation Sans" font-size="12.6" stroke="#000" stroke-width="0.15" fill="#000" textLength="199.95" lengthAdjust="spacingAndGlyphs">zahonlijeanbaptiste@gmail.com</text>
<text x="826.26" y="692.7" font-family="Liberation Sans" font-size="12.6" stroke="#000" stroke-width="0.15" fill="#000" textLength="41.74" lengthAdjust="spacingAndGlyphs">136500</text>
<text x="872.90" y="692.7" font-family="Liberation Sans" font-size="12.6" stroke="#000" stroke-width="0.15" fill="#000" textLength="24.61" lengthAdjust="spacingAndGlyphs">XOF</text>
<text x="967.32" y="692.7" font-family="Liberation Sans" font-size="12.6" stroke="#000" stroke-width="0.15" fill="#000" textLength="32.62" lengthAdjust="spacingAndGlyphs">Mock</text>
<text x="1132.40" y="692.7" font-family="Liberation Sans" font-size="12.6" stroke="#000" stroke-width="0.15" fill="#000" textLength="167.30" lengthAdjust="spacingAndGlyphs">6690ec1291d0ce8f230bd5a2</text>
<text x="1349.00" y="692.7" font-family="Liberation Sans" font-size="12.6" stroke="#000" stroke-width="0.15" fill="#000" textLength="73.99" lengthAdjust="spacingAndGlyphs">COMPLETED</text>
<text x="1575.60" y="692.7" font-family="Liberation Sans" font-size="12.6" stroke="#000" stroke-width="0.15" fill="#000" textLength="161.60" lengthAdjust="spacingAndGlyphs">2024-07-12T08:40:58+00:00</text>
<text x="24.50" y="712.7" font-family="Liberation Sans" font-size="12.6" stroke="#000" stroke-width="0.15" fill="#000" textLength="166.25" lengthAdjust="spacingAndGlyphs">6690ed47494549e8ff031b83</text>
<text x="241.30" y="712.7" font-family="Liberation Sans" font-size="12.6" stroke="#000" stroke-width="0.15" fill="#000" textLength="63.49" lengthAdjust="spacingAndGlyphs">COMPANY</text>
<text x="509.00" y="712.7" font-family="Liberation Sans" font-size="12.6" stroke="#000" stroke-width="0.15" fill="#000" textLength="20.90" lengthAdjust="spacingAndGlyphs">258</text>
<text x="535.20" y="712.7" font-family="Liberation Sans" font-size="12.6" stroke="#000" stroke-width="0.15" fill="#000" textLength="199.95" lengthAdjust="spacingAndGlyphs">zahonlijeanbaptiste@gmail.com</text>
<text x="833.22" y="712.7" font-family="Liberation Sans" font-size="12.6" stroke="#000" stroke-width="0.15" fill="#000" textLength="34.78" lengthAdjust="spacingAndGlyphs">42500</text>
<text x="872.90" y="712.7" font-family="Liberation Sans" font-size="12.6" stroke="#000" stroke-width="0.15" fill="#000" textLength="24.61" lengthAdjust="spacingAndGlyphs">XOF</text>
<text x="967.32" y="712.7" font-family="Liberation Sans" font-size="12.6" stroke="#000" stroke-width="0.15" fill="#000" textLength="32.62" lengthAdjust="spacingAndGlyphs">Mock</text>
<text x="1132.40" y="712.7" font-family="Liberation Sans" font-size="12.6" stroke="#000" stroke-width="0.15" fill="#000" textLength="166.96" lengthAdjust="spacingAndGlyphs">6690ed47494549e8ff031b82</text>
<text x="1349.00" y="712.7" font-family="Liberation Sans" font-size="12.6" stroke="#000" stroke-width="0.15" fill="#000" textLength="73.99" lengthAdjust="spacingAndGlyphs">COMPLETED</text>
<text x="1575.60" y="712.7" font-family="Liberation Sans" font-size="12.6" stroke="#000" stroke-width="0.15" fill="#000" textLength="161.60" lengthAdjust="spacingAndGlyphs">2024-07-12T08:45:59+00:00</text>
<text x="24.50" y="732.7" font-family="Liberation Sans" font-size="12.6" stroke="#000" stroke-width="0.15" fill="#000" textLength="167.38" lengthAdjust="spacingAndGlyphs">6691074668ac3fd5640d4a93</text>
<text x="241.30" y="732.7" font-family="Liberation Sans" font-size="12.6" stroke="#000" stroke-width="0.15" fill="#000" textLength="63.49" lengthAdjust="spacingAndGlyphs">COMPANY</text>
<text x="509.00" y="732.7" font-family="Liberation Sans" font-size="12.6" stroke="#000" stroke-width="0.15" fill="#000" textLength="20.90" lengthAdjust="spacingAndGlyphs">259</text>
<text x="535.20" y="732.7" font-family="Liberation Sans" font-size="12.6" stroke="#000" stroke-width="0.15" fill="#000" textLength="199.95" lengthAdjust="spacingAndGlyphs">zahonlijeanbaptiste@gmail.com</text>
<text x="826.26" y="732.7" font-family="Liberation Sans" font-size="12.6" stroke="#000" stroke-width="0.15" fill="#000" textLength="41.74" lengthAdjust="spacingAndGlyphs">140000</text>
<text x="872.90" y="732.7" font-family="Liberation Sans" font-size="12.6" stroke="#000" stroke-width="0.15" fill="#000" textLength="24.61" lengthAdjust="spacingAndGlyphs">XOF</text>
<text x="967.32" y="732.7" font-family="Liberation Sans" font-size="12.6" stroke="#000" stroke-width="0.15" fill="#000" textLength="32.62" lengthAdjust="spacingAndGlyphs">Mock</text>
<text x="1132.40" y="732.7" font-family="Liberation Sans" font-size="12.6" stroke="#000" stroke-width="0.15" fill="#000" textLength="168.09" lengthAdjust="spacingAndGlyphs">6691074668ac3fd5640d4a92</text>
<text x="1349.00" y="732.7" font-family="Liberation Sans" font-size="12.6" stroke="#000" stroke-width="0.15" fill="#000" textLength="73.99" lengthAdjust="spacingAndGlyphs">COMPLETED</text>
<text x="1575.60" y="732.7" font-family="Liberation Sans" font-size="12.6" stroke="#000" stroke-width="0.15" fill="#000" textLength="161.60" lengthAdjust="spacingAndGlyphs">2024-07-12T10:36:54+00:00</text>
<text x="24.50" y="752.7" font-family="Liberation Sans" font-size="12.6" stroke="#000" stroke-width="0.15" fill="#000" textLength="167.77" lengthAdjust="spacingAndGlyphs">6691394526c69d01100daf53</text>
<text x="241.30" y="752.7" font-family="Liberation Sans" font-size="12.6" stroke="#000" stroke-width="0.15" fill="#000" textLength="63.49" lengthAdjust="spacingAndGlyphs">COMPANY</text>
<text x="509.00" y="752.7" font-family="Liberation Sans" font-size="12.6" stroke="#000" stroke-width="0.15" fill="#000" textLength="20.90" lengthAdjust="spacingAndGlyphs">260</text>
<text x="535.20" y="752.7" font-family="Liberation Sans" font-size="12.6" stroke="#000" stroke-width="0.15" fill="#000" textLength="199.95" lengthAdjust="spacingAndGlyphs">zahonlijeanbaptiste@gmail.com</text>
<text x="833.22" y="752.7" font-family="Liberation Sans" font-size="12.6" stroke="#000" stroke-width="0.15" fill="#000" textLength="34.78" lengthAdjust="spacingAndGlyphs">12000</text>
<text x="872.90" y="752.7" font-family="Liberation Sans" font-size="12.6" stroke="#000" stroke-width="0.15" fill="#000" textLength="24.61" lengthAdjust="spacingAndGlyphs">XOF</text>
<text x="967.32" y="752.7" font-family="Liberation Sans" font-size="12.6" stroke="#000" stroke-width="0.15" fill="#000" textLength="32.62" lengthAdjust="spacingAndGlyphs">Mock</text>
<text x="1132.40" y="752.7" font-family="Liberation Sans" font-size="12.6" stroke="#000" stroke-width="0.15" fill="#000" textLength="168.49" lengthAdjust="spacingAndGlyphs">6691394426c69d01100daf52</text>
<text x="1349.00" y="752.7" font-family="Liberation Sans" font-size="12.6" stroke="#000" stroke-width="0.15" fill="#000" textLength="73.99" lengthAdjust="spacingAndGlyphs">COMPLETED</text>
<text x="1575.60" y="752.7" font-family="Liberation Sans" font-size="12.6" stroke="#000" stroke-width="0.15" fill="#000" textLength="161.60" lengthAdjust="spacingAndGlyphs">2024-07-12T14:10:13+00:00</text>
<text x="24.50" y="772.7" font-family="Liberation Sans" font-size="12.6" stroke="#000" stroke-width="0.15" fill="#000" textLength="164.15" lengthAdjust="spacingAndGlyphs">66913cef1af5b0dee300a453</text>
<text x="241.30" y="772.7" font-family="Liberation Sans" font-size="12.6" stroke="#000" stroke-width="0.15" fill="#000" textLength="63.49" lengthAdjust="spacingAndGlyphs">COMPANY</text>
<text x="509.00" y="772.7" font-family="Liberation Sans" font-size="12.6" stroke="#000" stroke-width="0.15" fill="#000" textLength="20.90" lengthAdjust="spacingAndGlyphs">261</text>
<text x="535.20" y="772.7" font-family="Liberation Sans" font-size="12.6" stroke="#000" stroke-width="0.15" fill="#000" textLength="199.95" lengthAdjust="spacingAndGlyphs">zahonlijeanbaptiste@gmail.com</text>
<text x="826.26" y="772.7" font-family="Liberation Sans" font-size="12.6" stroke="#000" stroke-width="0.15" fill="#000" textLength="41.74" lengthAdjust="spacingAndGlyphs">340000</text>
<text x="872.90" y="772.7" font-family="Liberation Sans" font-size="12.6" stroke="#000" stroke-width="0.15" fill="#000" textLength="24.61" lengthAdjust="spacingAndGlyphs">XOF</text>
<text x="967.32" y="772.7" font-family="Liberation Sans" font-size="12.6" stroke="#000" stroke-width="0.15" fill="#000" textLength="32.62" lengthAdjust="spacingAndGlyphs">Mock</text>
<text x="1132.40" y="772.7" font-family="Liberation Sans" font-size="12.6" stroke="#000" stroke-width="0.15" fill="#000" textLength="164.84" lengthAdjust="spacingAndGlyphs">66913cef1af5b0dee300a452</text>
<text x="1349.00" y="772.7" font-family="Liberation Sans" font-size="12.6" stroke="#000" stroke-width="0.15" fill="#000" textLength="73.99" lengthAdjust="spacingAndGlyphs">COMPLETED</text>
<text x="1575.60" y="772.7" font-family="Liberation Sans" font-size="12.6" stroke="#000" stroke-width="0.15" fill="#000" textLength="161.60" lengthAdjust="spacingAndGlyphs">2024-07-12T14:25:51+00:00</text>
<text x="24.50" y="792.7" font-family="Liberation Sans" font-size="12.6" stroke="#000" stroke-width="0.15" fill="#000" textLength="172.84" lengthAdjust="spacingAndGlyphs">669148320006deb96209dbb3</text>
<text x="241.30" y="792.7" font-family="Liberation Sans" font-size="12.6" stroke="#000" stroke-width="0.15" fill="#000" textLength="63.49" lengthAdjust="spacingAndGlyphs">COMPANY</text>
<text x="509.00" y="792.7" font-family="Liberation Sans" font-size="12.6" stroke="#000" stroke-width="0.15" fill="#000" textLength="20.90" lengthAdjust="spacingAndGlyphs">262</text>
<text x="535.20" y="792.7" font-family="Liberation Sans" font-size="12.6" stroke="#000" stroke-width="0.15" fill="#000" textLength="199.95" lengthAdjust="spacingAndGlyphs">zahonlijeanbaptiste@gmail.com</text>
<text x="826.26" y="792.7" font-family="Liberation Sans" font-size="12.6" stroke="#000" stroke-width="0.15" fill="#000" textLength="41.74" lengthAdjust="spacingAndGlyphs">113500</text>
<text x="872.90" y="792.7" font-family="Liberation Sans" font-size="12.6" stroke="#000" stroke-width="0.15" fill="#000" textLength="24.61" lengthAdjust="spacingAndGlyphs">XOF</text>
<text x="967.32" y="792.7" font-family="Liberation Sans" font-size="12.6" stroke="#000" stroke-width="0.15" fill="#000" textLength="32.62" lengthAdjust="spacingAndGlyphs">Mock</text>
<text x="1132.40" y="792.7" font-family="Liberation Sans" font-size="12.6" stroke="#000" stroke-width="0.15" fill="#000" textLength="173.57" lengthAdjust="spacingAndGlyphs">669148320006deb96209dbb2</text>
<text x="1349.00" y="792.7" font-family="Liberation Sans" font-size="12.6" stroke="#000" stroke-width="0.15" fill="#000" textLength="73.99" lengthAdjust="spacingAndGlyphs">COMPLETED</text>
<text x="1575.60" y="792.7" font-family="Liberation Sans" font-size="12.6" stroke="#000" stroke-width="0.15" fill="#000" textLength="161.60" lengthAdjust="spacingAndGlyphs">2024-07-12T15:13:54+00:00</text>
<text x="24.50" y="812.7" font-family="Liberation Sans" font-size="12.6" stroke="#000" stroke-width="0.15" fill="#000" textLength="164.41" lengthAdjust="spacingAndGlyphs">6691570c5235483a740ff223</text>
<text x="241.30" y="812.7" font-family="Liberation Sans" font-size="12.6" stroke="#000" stroke-width="0.15" fill="#000" textLength="63.49" lengthAdjust="spacingAndGlyphs">COMPANY</text>
<text x="509.00" y="812.7" font-family="Liberation Sans" font-size="12.6" stroke="#000" stroke-width="0.15" fill="#000" textLength="20.90" lengthAdjust="spacingAndGlyphs">263</text>
<text x="535.20" y="812.7" font-family="Liberation Sans" font-size="12.6" stroke="#000" stroke-width="0.15" fill="#000" textLength="199.95" lengthAdjust="spacingAndGlyphs">zahonlijeanbaptiste@gmail.com</text>
<text x="833.22" y="812.7" font-family="Liberation Sans" font-size="12.6" stroke="#000" stroke-width="0.15" fill="#000" textLength="34.78" lengthAdjust="spacingAndGlyphs">70000</text>
<text x="872.90" y="812.7" font-family="Liberation Sans" font-size="12.6" stroke="#000" stroke-width="0.15" fill="#000" textLength="24.61" lengthAdjust="spacingAndGlyphs">XOF</text>
<text x="967.32" y="812.7" font-family="Liberation Sans" font-size="12.6" stroke="#000" stroke-width="0.15" fill="#000" textLength="32.62" lengthAdjust="spacingAndGlyphs">Mock</text>
<text x="1132.40" y="812.7" font-family="Liberation Sans" font-size="12.6" stroke="#000" stroke-width="0.15" fill="#000" textLength="165.11" lengthAdjust="spacingAndGlyphs">6691570c5235483a740ff222</text>
<text x="1349.00" y="812.7" font-family="Liberation Sans" font-size="12.6" stroke="#000" stroke-width="0.15" fill="#000" textLength="73.99" lengthAdjust="spacingAndGlyphs">COMPLETED</text>
<text x="1575.60" y="812.7" font-family="Liberation Sans" font-size="12.6" stroke="#000" stroke-width="0.15" fill="#000" textLength="161.60" lengthAdjust="spacingAndGlyphs">2024-07-12T16:17:16+00:00</text>
<text x="24.50" y="832.7" font-family="Liberation Sans" font-size="12.6" stroke="#000" stroke-width="0.15" fill="#000" textLength="164.26" lengthAdjust="spacingAndGlyphs">66915d6fb5f5ed96860c7c13</text>
<text x="241.30" y="832.7" font-family="Liberation Sans" font-size="12.6" stroke="#000" stroke-width="0.15" fill="#000" textLength="63.49" lengthAdjust="spacingAndGlyphs">COMPANY</text>
<text x="509.00" y="832.7" font-family="Liberation Sans" font-size="12.6" stroke="#000" stroke-width="0.15" fill="#000" textLength="20.90" lengthAdjust="spacingAndGlyphs">264</text>
<text x="535.20" y="832.7" font-family="Liberation Sans" font-size="12.6" stroke="#000" stroke-width="0.15" fill="#000" textLength="199.95" lengthAdjust="spacingAndGlyphs">zahonlijeanbaptiste@gmail.com</text>
<text x="833.22" y="832.7" font-family="Liberation Sans" font-size="12.6" stroke="#000" stroke-width="0.15" fill="#000" textLength="34.78" lengthAdjust="spacingAndGlyphs">42500</text>
<text x="872.90" y="832.7" font-family="Liberation Sans" font-size="12.6" stroke="#000" stroke-width="0.15" fill="#000" textLength="24.61" lengthAdjust="spacingAndGlyphs">XOF</text>
<text x="967.32" y="832.7" font-family="Liberation Sans" font-size="12.6" stroke="#000" stroke-width="0.15" fill="#000" textLength="32.62" lengthAdjust="spacingAndGlyphs">Mock</text>
<text x="1132.40" y="832.7" font-family="Liberation Sans" font-size="12.6" stroke="#000" stroke-width="0.15" fill="#000" textLength="164.96" lengthAdjust="spacingAndGlyphs">66915d6fb5f5ed96860c7c12</text>
<text x="1349.00" y="832.7" font-family="Liberation Sans" font-size="12.6" stroke="#000" stroke-width="0.15" fill="#000" textLength="73.99" lengthAdjust="spacingAndGlyphs">COMPLETED</text>
<text x="1575.60" y="832.7" font-family="Liberation Sans" font-size="12.6" stroke="#000" stroke-width="0.15" fill="#000" textLength="161.60" lengthAdjust="spacingAndGlyphs">2024-07-12T16:44:31+00:00</text>
<text x="24.50" y="852.7" font-family="Liberation Sans" font-size="12.6" stroke="#000" stroke-width="0.15" fill="#000" textLength="167.11" lengthAdjust="spacingAndGlyphs">66915eddb32c0642f902c443</text>
<text x="241.30" y="852.7" font-family="Liberation Sans" font-size="12.6" stroke="#000" stroke-width="0.15" fill="#000" textLength="63.49" lengthAdjust="spacingAndGlyphs">COMPANY</text>
<text x="509.00" y="852.7" font-family="Liberation Sans" font-size="12.6" stroke="#000" stroke-width="0.15" fill="#000" textLength="20.90" lengthAdjust="spacingAndGlyphs">265</text>
<text x="535.20" y="852.7" font-family="Liberation Sans" font-size="12.6" stroke="#000" stroke-width="0.15" fill="#000" textLength="199.95" lengthAdjust="spacingAndGlyphs">zahonlijeanbaptiste@gmail.com</text>
<text x="833.22" y="852.7" font-family="Liberation Sans" font-size="12.6" stroke="#000" stroke-width="0.15" fill="#000" textLength="34.78" lengthAdjust="spacingAndGlyphs">95000</text>
<text x="872.90" y="852.7" font-family="Liberation Sans" font-size="12.6" stroke="#000" stroke-width="0.15" fill="#000" textLength="24.61" lengthAdjust="spacingAndGlyphs">XOF</text>
<text x="967.32" y="852.7" font-family="Liberation Sans" font-size="12.6" stroke="#000" stroke-width="0.15" fill="#000" textLength="32.62" lengthAdjust="spacingAndGlyphs">Mock</text>
<text x="1132.40" y="852.7" font-family="Liberation Sans" font-size="12.6" stroke="#000" stroke-width="0.15" fill="#000" textLength="166.37" lengthAdjust="spacingAndGlyphs">66915edcb32c0642f902c442</text>
<text x="1349.00" y="852.7" font-family="Liberation Sans" font-size="12.6" stroke="#000" stroke-width="0.15" fill="#000" textLength="73.99" lengthAdjust="spacingAndGlyphs">COMPLETED</text>
<text x="1575.60" y="852.7" font-family="Liberation Sans" font-size="12.6" stroke="#000" stroke-width="0.15" fill="#000" textLength="161.60" lengthAdjust="spacingAndGlyphs">2024-07-12T16:50:37+00:00</text>
<text x="24.50" y="872.7" font-family="Liberation Sans" font-size="12.6" stroke="#000" stroke-width="0.15" fill="#000" textLength="163.74" lengthAdjust="spacingAndGlyphs">66915fcb82a3250f260dc033</text>
<text x="241.30" y="872.7" font-family="Liberation Sans" font-size="12.6" stroke="#000" stroke-width="0.15" fill="#000" textLength="63.49" lengthAdjust="spacingAndGlyphs">COMPANY</text>
<text x="509.00" y="872.7" font-family="Liberation Sans" font-size="12.6" stroke="#000" stroke-width="0.15" fill="#000" textLength="20.90" lengthAdjust="spacingAndGlyphs">266</text>
<text x="535.20" y="872.7" font-family="Liberation Sans" font-size="12.6" stroke="#000" stroke-width="0.15" fill="#000" textLength="199.95" lengthAdjust="spacingAndGlyphs">zahonlijeanbaptiste@gmail.com</text>
<text x="833.22" y="872.7" font-family="Liberation Sans" font-size="12.6" stroke="#000" stroke-width="0.15" fill="#000" textLength="34.78" lengthAdjust="spacingAndGlyphs">70000</text>
<text x="872.90" y="872.7" font-family="Liberation Sans" font-size="12.6" stroke="#000" stroke-width="0.15" fill="#000" textLength="24.61" lengthAdjust="spacingAndGlyphs">XOF</text>
<text x="967.32" y="872.7" font-family="Liberation Sans" font-size="12.6" stroke="#000" stroke-width="0.15" fill="#000" textLength="32.62" lengthAdjust="spacingAndGlyphs">Mock</text>
<text x="1132.40" y="872.7" font-family="Liberation Sans" font-size="12.6" stroke="#000" stroke-width="0.15" fill="#000" textLength="164.43" lengthAdjust="spacingAndGlyphs">66915fcb82a3250f260dc032</text>
<text x="1349.00" y="872.7" font-family="Liberation Sans" font-size="12.6" stroke="#000" stroke-width="0.15" fill="#000" textLength="73.99" lengthAdjust="spacingAndGlyphs">COMPLETED</text>
<text x="1575.60" y="872.7" font-family="Liberation Sans" font-size="12.6" stroke="#000" stroke-width="0.15" fill="#000" textLength="161.60" lengthAdjust="spacingAndGlyphs">2024-07-12T16:54:35+00:00</text>
<text x="24.50" y="892.7" font-family="Liberation Sans" font-size="12.6" stroke="#000" stroke-width="0.15" fill="#000" textLength="167.65" lengthAdjust="spacingAndGlyphs">669160c597a92fd12709d1e3</text>
<text x="241.30" y="892.7" font-family="Liberation Sans" font-size="12.6" stroke="#000" stroke-width="0.15" fill="#000" textLength="63.49" lengthAdjust="spacingAndGlyphs">COMPANY</text>
<text x="509.00" y="892.7" font-family="Liberation Sans" font-size="12.6" stroke="#000" stroke-width="0.15" fill="#000" textLength="20.90" lengthAdjust="spacingAndGlyphs">267</text>
<text x="535.20" y="892.7" font-family="Liberation Sans" font-size="12.6" stroke="#000" stroke-width="0.15" fill="#000" textLength="199.95" lengthAdjust="spacingAndGlyphs">zahonlijeanbaptiste@gmail.com</text>
<text x="833.22" y="892.7" font-family="Liberation Sans" font-size="12.6" stroke="#000" stroke-width="0.15" fill="#000" textLength="34.78" lengthAdjust="spacingAndGlyphs">42500</text>
<text x="872.90" y="892.7" font-family="Liberation Sans" font-size="12.6" stroke="#000" stroke-width="0.15" fill="#000" textLength="24.61" lengthAdjust="spacingAndGlyphs">XOF</text>
<text x="967.32" y="892.7" font-family="Liberation Sans" font-size="12.6" stroke="#000" stroke-width="0.15" fill="#000" textLength="32.62" lengthAdjust="spacingAndGlyphs">Mock</text>
<text x="1132.40" y="892.7" font-family="Liberation Sans" font-size="12.6" stroke="#000" stroke-width="0.15" fill="#000" textLength="168.36" lengthAdjust="spacingAndGlyphs">669160c597a92fd12709d1e2</text>
<text x="1349.00" y="892.7" font-family="Liberation Sans" font-size="12.6" stroke="#000" stroke-width="0.15" fill="#000" textLength="73.99" lengthAdjust="spacingAndGlyphs">COMPLETED</text>
<text x="1575.60" y="892.7" font-family="Liberation Sans" font-size="12.6" stroke="#000" stroke-width="0.15" fill="#000" textLength="161.60" lengthAdjust="spacingAndGlyphs">2024-07-12T16:58:45+00:00</text>
</g>
<rect x="1890" y="258" width="25" height="640" fill="#e3e3e3" />
<rect x="1893" y="258" width="21" height="638" rx="10" fill="#f4f4f4"/>
<path d="M1898 272.5 L1903.5 264 L1909 272.5 Z" fill="#707070" stroke="#707070" stroke-width="1" stroke-linejoin="round"/>
<rect x="1898" y="279" width="11" height="68" rx="5.5" fill="#6e6e6e"/>
<path d="M1898 881 L1909 881 L1903.5 889.5 Z" fill="#707070" stroke="#707070" stroke-width="1" stroke-linejoin="round"/>
<rect x="0" y="893" width="1890" height="5" fill="#ffffff" />
<rect x="-10" y="893" width="146.6" height="14" rx="7" fill="#e2e2e2"/>
<rect x="243" y="893" width="1660" height="14" rx="7" fill="#e2e2e2"/>
</svg>
</body></html>
